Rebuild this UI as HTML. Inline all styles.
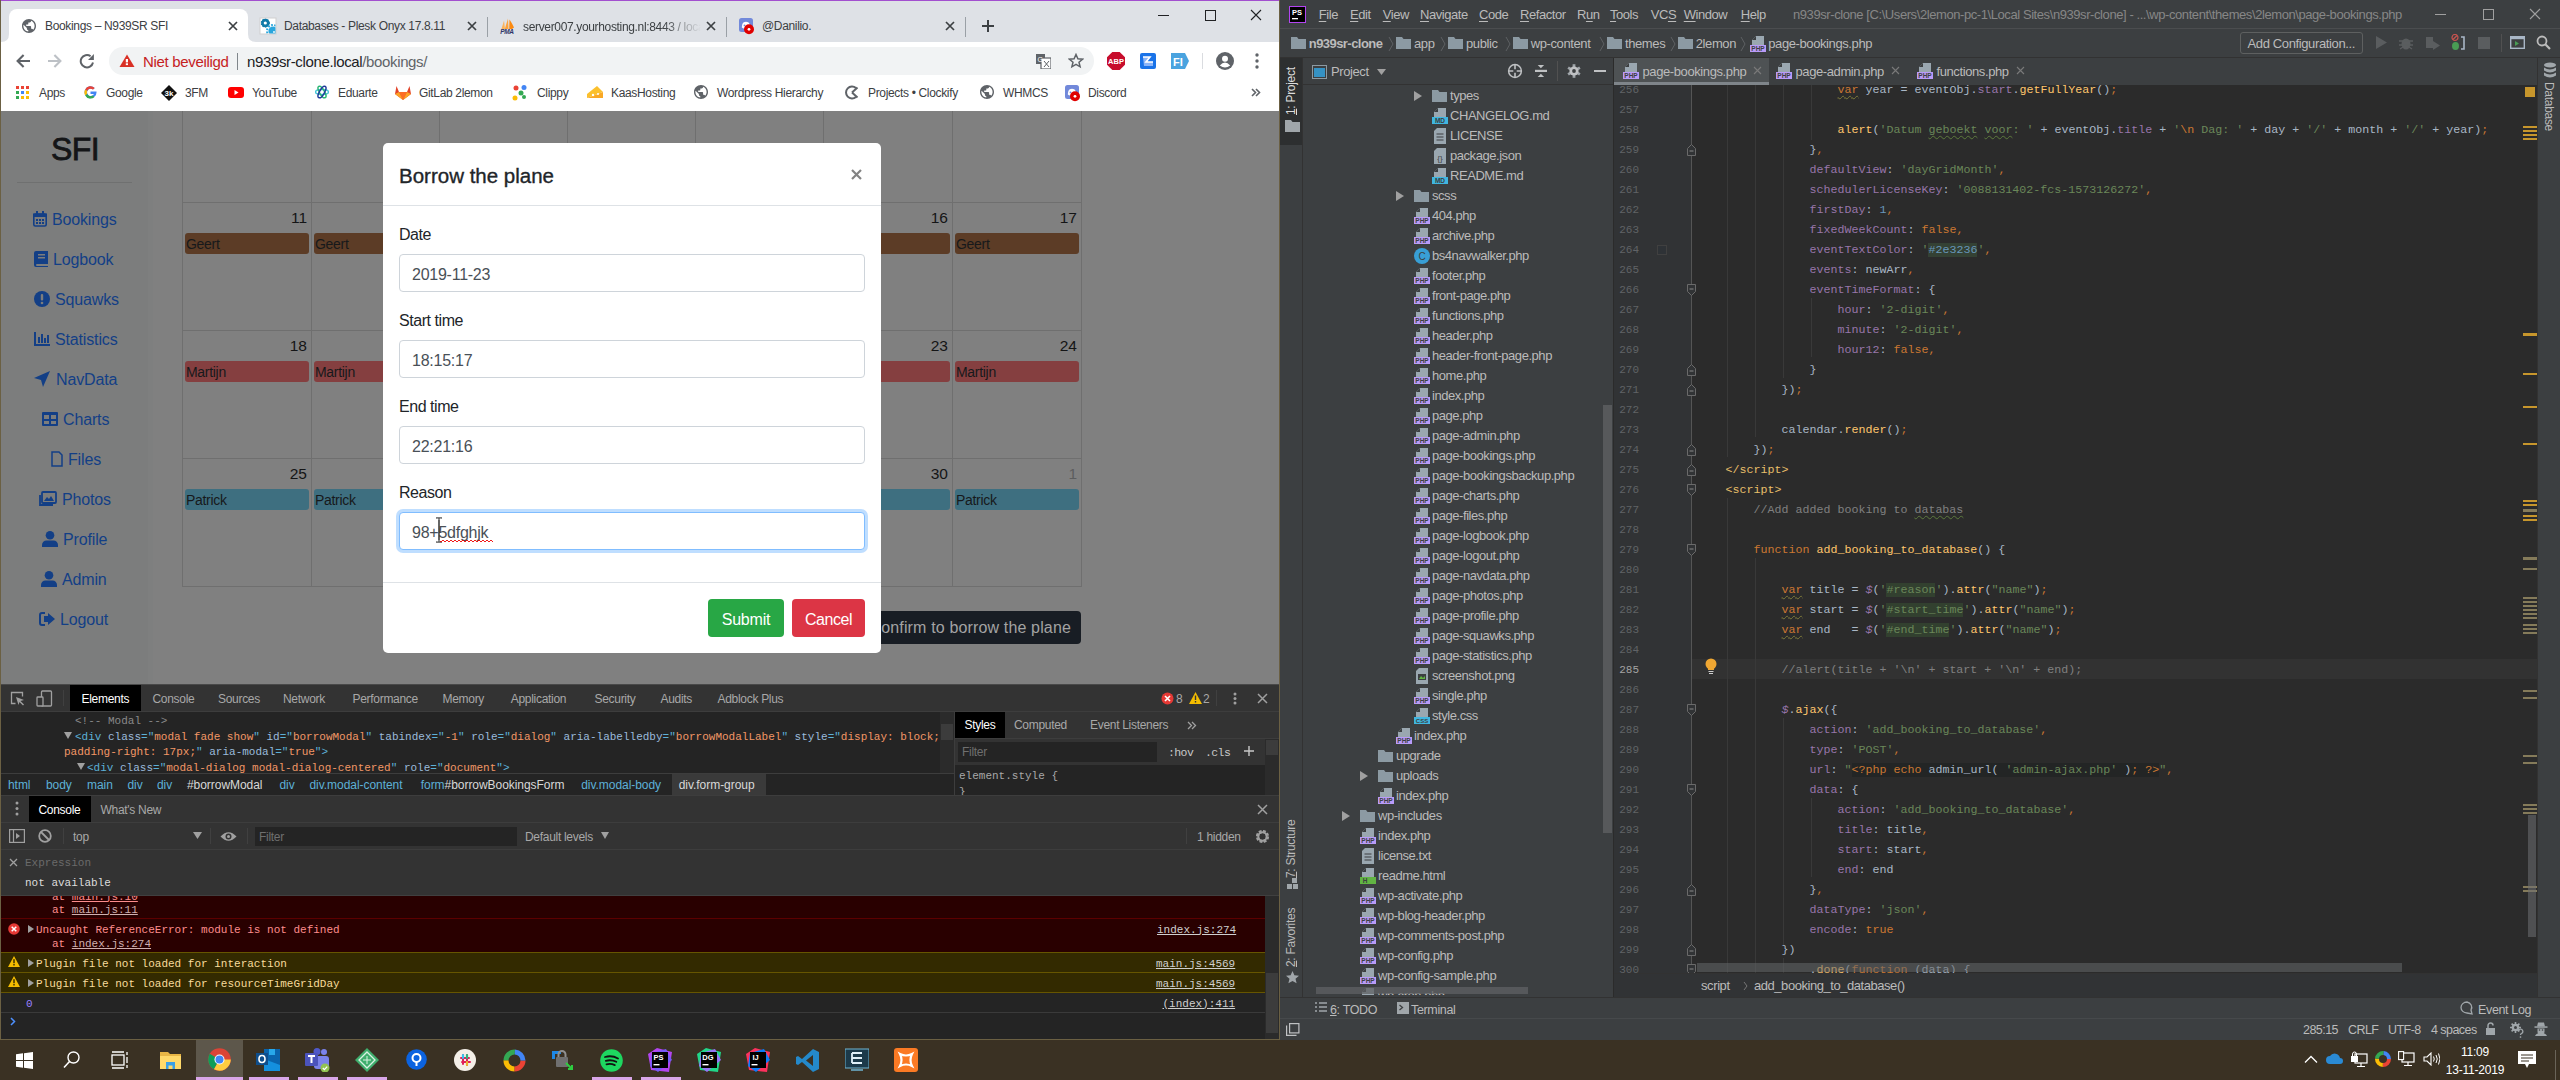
<!DOCTYPE html>
<html><head><meta charset="utf-8"><title>Screen</title>
<style>
html,body{margin:0;padding:0;width:2560px;height:1080px;overflow:hidden;background:#3c3f41;}
body{position:relative;font-family:"Liberation Sans",sans-serif;}
.a{position:absolute;}
.t{position:absolute;white-space:nowrap;}
u{text-decoration:underline;text-underline-offset:1px;}
</style></head><body>
<div class="a" style="left:0px;top:0px;width:1279px;height:42px;background:#dee1e6;"></div><div class="a" style="left:0px;top:0px;width:1279px;height:1px;background:#a24fcf;"></div><div class="a" style="left:0px;top:0px;width:1px;height:1040px;background:#6b6043;"></div><div class="a" style="left:1279px;top:0px;width:1px;height:1040px;background:#6b6043;"></div><div class="a" style="left:9px;top:9px;width:239px;height:34px;background:#fff;border-radius:8px 8px 0 0"></div><svg class="a" style="left:1px;top:34px;" width="8" height="8" viewBox="0 0 8 8"><path d="M0 8 Q8 8 8 0 L8 8Z" fill="#fff"/></svg><svg class="a" style="left:248px;top:34px;" width="8" height="8" viewBox="0 0 8 8"><path d="M8 8 Q0 8 0 0 L0 8Z" fill="#fff"/></svg><svg class="a" style="left:22px;top:19px;" width="14" height="14" viewBox="0 0 14 14"><svg viewBox="2 2 20 20" width="14" height="14"><path fill="#5f6368" d="M12 2C6.48 2 2 6.48 2 12s4.48 10 10 10 10-4.48 10-10S17.52 2 12 2zm-1 17.930c-3.95-.49-7-3.85-7-7.93 0-.62.08-1.21.21-1.79L9 15v1c0 1.1.9 2 2 2v1.93zm6.9-2.54c-.26-.81-1-1.39-1.9-1.39h-1v-3c0-.55-.45-1-1-1H8v-2h2c.55 0 1-.45 1-1V7h2c1.1 0 2-.9 2-2v-.41c2.930 1.19 5 4.06 5 7.41 0 2.08-.8 3.97-2.1 5.39z"/></svg></svg><div class="t" style="top:18.34px;font-size:12px;line-height:17px;color:#3c4043;font-family:'Liberation Sans', sans-serif;letter-spacing:-0.336px;left:45px;">Bookings – N939SR SFI</div><svg class="a" style="left:228.0px;top:21.0px;" width="10" height="10" viewBox="0 0 10 10"><path d="M1 1L9 9M9 1L1 9" stroke="#3c4043" stroke-width="1.7"/></svg><svg class="a" style="left:259px;top:17px;" width="18" height="18" viewBox="0 0 18 18"><defs><clipPath id="pc"><rect x="1.5" y="1.5" width="15" height="15"/></clipPath></defs><rect x="1" y="1" width="16" height="16" fill="#fff" stroke="#cfcfcf" stroke-width="1"/><g clip-path="url(#pc)"><circle cx="6.3" cy="6" r="2.9" fill="none" stroke="#0f7aa8" stroke-width="2.6"/><circle cx="6.3" cy="6" r="3.9" fill="none" stroke="#0f7aa8" stroke-width="1.4" stroke-dasharray="1.3 1.2"/><circle cx="14" cy="14" r="4.6" fill="#2aa6dd"/><circle cx="14" cy="14" r="6" fill="none" stroke="#2aa6dd" stroke-width="2" stroke-dasharray="1.8 1.4"/><circle cx="15" cy="15" r="0.9" fill="#fff"/></g></svg><div class="t" style="top:18.34px;font-size:12px;line-height:17px;color:#3c4043;font-family:'Liberation Sans', sans-serif;letter-spacing:-0.336px;left:284px;">Databases - Plesk Onyx 17.8.11</div><svg class="a" style="left:467.0px;top:21.0px;" width="10" height="10" viewBox="0 0 10 10"><path d="M1 1L9 9M9 1L1 9" stroke="#3c4043" stroke-width="1.7"/></svg><div class="a" style="left:487px;top:17px;width:1px;height:20px;background:#9aa0a6;"></div><svg class="a" style="left:498px;top:17px;" width="18" height="18" viewBox="0 0 18 18"><path d="M3.5 12 L6 3.5 L7 12Z" fill="#fbb35c"/><path d="M6.8 12 L10 1.5 L10.5 12Z" fill="#fca23c"/><path d="M11.2 12 L11.5 2.5 Q14 6 16 10.5 L14 12Z" fill="#fb8a10"/><text x="9" y="17" font-size="6.5" font-weight="700" font-style="italic" text-anchor="middle" fill="#2e3466" font-family="Liberation Sans" letter-spacing="-0.3">PMA</text></svg><div class="t" style="left:523px;top:18px;width:185px;height:18px;overflow:hidden;font:12px/18px 'Liberation Sans', sans-serif;letter-spacing:-0.34px;color:#3c4043;white-space:nowrap;-webkit-mask-image:linear-gradient(90deg,#000 140px,transparent 178px)">server007.yourhosting.nl:8443 / localhost</div><svg class="a" style="left:706.0px;top:21.0px;" width="10" height="10" viewBox="0 0 10 10"><path d="M1 1L9 9M9 1L1 9" stroke="#3c4043" stroke-width="1.7"/></svg><div class="a" style="left:726px;top:17px;width:1px;height:20px;background:#9aa0a6;"></div><svg class="a" style="left:739px;top:18px;" width="17" height="17" viewBox="0 0 17 17"><rect x="0" y="0" width="14" height="14" rx="2.5" fill="#7289da"/><path d="M2.8 9.5 Q3 5.3 4.8 4.2 Q7 3.5 9.2 4.2 Q11 5.3 11.2 9.5 Q9.5 10.8 8.3 10.3 L7.8 9.6 Q7 9.9 6.2 9.6 L5.7 10.3 Q4.5 10.8 2.8 9.5Z" fill="#fff"/><circle cx="5.5" cy="7.4" r="0.9" fill="#7289da"/><circle cx="10" cy="11.3" r="5" fill="#e00000"/><circle cx="10" cy="11.3" r="1.4" fill="#fff"/></svg><div class="t" style="top:18.34px;font-size:12px;line-height:17px;color:#3c4043;font-family:'Liberation Sans', sans-serif;letter-spacing:-0.336px;left:762px;">@Danilio.</div><svg class="a" style="left:945.0px;top:21.0px;" width="10" height="10" viewBox="0 0 10 10"><path d="M1 1L9 9M9 1L1 9" stroke="#3c4043" stroke-width="1.7"/></svg><div class="a" style="left:965px;top:17px;width:1px;height:20px;background:#9aa0a6;"></div><svg class="a" style="left:982px;top:20px;" width="12" height="12" viewBox="0 0 12 12"><path d="M6 0V12M0 6H12" stroke="#3c4043" stroke-width="2"/></svg><div class="a" style="left:1158px;top:15px;width:11px;height:1px;background:#202124;"></div><div class="a" style="left:1205px;top:10px;width:9px;height:9px;border:1px solid #202124"></div><svg class="a" style="left:1250px;top:9px;" width="12" height="12" viewBox="0 0 12 12"><path d="M1 1L11 11M11 1L1 11" stroke="#202124" stroke-width="1.1"/></svg><div class="a" style="left:1px;top:42px;width:1278px;height:36px;background:#fff;"></div><svg class="a" style="left:15px;top:53px;" width="16" height="16" viewBox="0 0 16 16"><path d="M15 8H2.8M8.6 2L2.6 8l6 6" stroke="#5f6368" stroke-width="2.1" fill="none"/></svg><svg class="a" style="left:47px;top:53px;" width="16" height="16" viewBox="0 0 16 16"><path d="M1 8H13.2M7.4 2l6 6-6 6" stroke="#bdc1c6" stroke-width="2.1" fill="none"/></svg><svg class="a" style="left:79px;top:53px;" width="16" height="16" viewBox="0 0 16 16"><path d="M14 9.5A6.2 6.2 0 1 1 11.6 3.2" stroke="#5f6368" stroke-width="2" fill="none"/><path d="M9 6.9L14.9 1V6.9z" fill="#5f6368"/></svg><div class="a" style="left:109px;top:47px;width:985px;height:28px;border-radius:14px;background:#f1f3f4"></div><svg class="a" style="left:119px;top:54px;" width="16" height="13" viewBox="0 0 16 13"><path d="M8 0.5L15.5 13H0.5Z" fill="#d93025"/><rect x="6.8" y="5" width="2.2" height="3.4" fill="#fff"/><rect x="6.8" y="9.3" width="2.2" height="1.8" fill="#fff"/></svg><div class="t" style="top:51.30px;font-size:15px;line-height:21px;color:#c5221f;font-family:'Liberation Sans', sans-serif;letter-spacing:-0.330px;left:143px;">Niet beveiligd</div><div class="a" style="left:237px;top:53px;width:1px;height:17px;background:#80868b;"></div><div class="t" style="top:51.30px;font-size:15px;line-height:21px;color:#202124;font-family:'Liberation Sans', sans-serif;letter-spacing:-0.360px;left:247px;">n939sr-clone.local<span style="color:#5f6368">/bookings/</span></div><svg class="a" style="left:1036px;top:54px;" width="15" height="15" viewBox="0 0 15 15"><rect x="0" y="0" width="9" height="10" fill="#5f6368"/><rect x="5" y="4" width="10" height="11" fill="#fff" stroke="#5f6368" stroke-width="1.2"/><text x="1.5" y="8" font-size="7" fill="#fff" font-family="Liberation Sans">G</text><path d="M8 7l5 6M13 7l-5 6" stroke="#5f6368" stroke-width="1"/></svg><svg class="a" style="left:1068px;top:53px;" width="16" height="16" viewBox="0 0 16 16"><path d="M8 1.5l1.9 4.3 4.6.4-3.5 3 1.1 4.6L8 11.4 3.9 13.8 5 9.2 1.5 6.2l4.6-.4z" fill="none" stroke="#5f6368" stroke-width="1.5"/></svg><svg class="a" style="left:1107px;top:52px;" width="18" height="18" viewBox="0 0 18 18"><path d="M5.3 0h7.4L18 5.3v7.4L12.7 18H5.3L0 12.7V5.3z" fill="#c70d2c"/><text x="9" y="12" font-size="7.5" font-weight="700" text-anchor="middle" fill="#fff" font-family="Liberation Sans">ABP</text></svg><svg class="a" style="left:1140px;top:53px;" width="16" height="16" viewBox="0 0 16 16"><rect x="0" y="0" width="16" height="16" rx="2" fill="#1a73e8"/><path d="M3 4 L10 4 L6 9 L13 9 L13 13 L4 13 Z" fill="#8ab4f8"/><path d="M3 4h7l-4 5h7" stroke="#fff" stroke-width="1.6" fill="none"/></svg><svg class="a" style="left:1171px;top:53px;" width="18" height="16" viewBox="0 0 18 16"><path d="M0 0H14L18 8 14 16H0Z" fill="#4aa3df"/><text x="2" y="12.5" font-size="11" font-weight="700" fill="#fff" font-family="Liberation Sans">FI</text></svg><div class="a" style="left:1202px;top:53px;width:1px;height:16px;background:#dadce0;"></div><svg class="a" style="left:1216px;top:52px;" width="18" height="18" viewBox="0 0 18 18"><circle cx="9" cy="9" r="9" fill="#5f6368"/><circle cx="9" cy="6.8" r="3" fill="#fff"/><path d="M3.8 13.5q5.2 -6 10.4 0q-5.2 4 -10.4 0z" fill="#fff"/></svg><svg class="a" style="left:1255px;top:53px;" width="4" height="16" viewBox="0 0 4 16"><circle cx="2" cy="2" r="1.7" fill="#5f6368"/><circle cx="2" cy="8" r="1.7" fill="#5f6368"/><circle cx="2" cy="14" r="1.7" fill="#5f6368"/></svg><div class="a" style="left:1px;top:78px;width:1278px;height:33px;background:#fff;"></div><svg class="a" style="left:16px;top:86px;" width="13" height="13" viewBox="0 0 13 13"><rect x="0" y="0" width="3" height="3" fill="#ea4335"/><rect x="5" y="0" width="3" height="3" fill="#ea4335"/><rect x="10" y="0" width="3" height="3" fill="#ea4335"/><rect x="0" y="5" width="3" height="3" fill="#34a853"/><rect x="5" y="5" width="3" height="3" fill="#4285f4"/><rect x="10" y="5" width="3" height="3" fill="#fbbc05"/><rect x="0" y="10" width="3" height="3" fill="#34a853"/><rect x="5" y="10" width="3" height="3" fill="#fbbc05"/><rect x="10" y="10" width="3" height="3" fill="#fbbc05"/></svg><div class="t" style="top:85.34px;font-size:12px;line-height:17px;color:#3c4043;font-family:'Liberation Sans', sans-serif;letter-spacing:-0.336px;left:39px;">Apps</div><svg class="a" style="left:84px;top:86px;" width="13" height="13" viewBox="0 0 13 13"><path d="M12.5 5.5H6.5v2.5h3.4A3.6 3.6 0 1 1 9 3.6l1.7-1.7A6 6 0 1 0 12.5 5.5z" fill="#4285f4"/><path d="M1.2 3.6l2 1.5A3.6 3.6 0 0 1 9 3.6l1.7-1.7A6 6 0 0 0 1.2 3.6z" fill="#ea4335"/><path d="M1.2 3.6a6 6 0 0 0 0 5.8l2-1.5a3.6 3.6 0 0 1 0-2.8z" fill="#fbbc05"/><path d="M1.2 9.4A6 6 0 0 0 10.5 11l-1.9-1.5A3.6 3.6 0 0 1 3.2 7.9z" fill="#34a853"/></svg><div class="t" style="top:85.34px;font-size:12px;line-height:17px;color:#3c4043;font-family:'Liberation Sans', sans-serif;letter-spacing:-0.336px;left:106px;">Google</div><svg class="a" style="left:161px;top:85px;" width="16" height="16" viewBox="0 0 16 16"><path d="M8 0L16 8 8 16 0 8z" fill="#111"/><text x="8" y="11" font-size="8" font-weight="700" text-anchor="middle" fill="#fff" font-family="Liberation Sans">3k</text></svg><div class="t" style="top:85.34px;font-size:12px;line-height:17px;color:#3c4043;font-family:'Liberation Sans', sans-serif;letter-spacing:-0.336px;left:185px;">3FM</div><svg class="a" style="left:228px;top:87px;" width="16" height="11" viewBox="0 0 16 11"><rect x="0" y="0" width="16" height="11" rx="3" fill="#f00"/><path d="M6.5 3v5l4-2.5z" fill="#fff"/></svg><div class="t" style="top:85.34px;font-size:12px;line-height:17px;color:#3c4043;font-family:'Liberation Sans', sans-serif;letter-spacing:-0.336px;left:252px;">YouTube</div><svg class="a" style="left:315px;top:85px;" width="14" height="14" viewBox="0 0 14 14"><ellipse cx="7" cy="7" rx="6.5" ry="2.5" fill="none" stroke="#4ac6d8" stroke-width="1.5"/><ellipse cx="7" cy="7" rx="6.5" ry="2.5" transform="rotate(60 7 7)" fill="none" stroke="#2bb673" stroke-width="1.5"/><ellipse cx="7" cy="7" rx="6.5" ry="2.5" transform="rotate(120 7 7)" fill="none" stroke="#1f3b9a" stroke-width="1.5"/></svg><div class="t" style="top:85.34px;font-size:12px;line-height:17px;color:#3c4043;font-family:'Liberation Sans', sans-serif;letter-spacing:-0.336px;left:338px;">Eduarte</div><svg class="a" style="left:395px;top:85px;" width="16" height="15" viewBox="0 0 16 15"><path d="M8 15L0 9 1.5 1 4 7h8l2.5-6L16 9z" fill="#e24329"/><path d="M8 15L4 7h8z" fill="#fc6d26"/><path d="M0 9l4-2 4 8z M16 9l-4-2-4 8z" fill="#fca326"/></svg><div class="t" style="top:85.34px;font-size:12px;line-height:17px;color:#3c4043;font-family:'Liberation Sans', sans-serif;letter-spacing:-0.336px;left:419px;">GitLab 2lemon</div><svg class="a" style="left:512px;top:85px;" width="16" height="16" viewBox="0 0 16 16"><circle cx="4" cy="3" r="2.5" fill="#ea4335"/><circle cx="12" cy="2.5" r="2.5" fill="#4285f4"/><circle cx="9" cy="8" r="2.5" fill="#34a853"/><circle cx="3" cy="13" r="2.5" fill="#fbbc05"/><circle cx="12" cy="12" r="2" fill="#34a853"/></svg><div class="t" style="top:85.34px;font-size:12px;line-height:17px;color:#3c4043;font-family:'Liberation Sans', sans-serif;letter-spacing:-0.336px;left:537px;">Clippy</div><svg class="a" style="left:587px;top:86px;" width="16" height="13" viewBox="0 0 16 13"><path d="M0 12L16 6 10 0 0 8z" fill="#fbc02d"/><path d="M0 12L16 6v6z" fill="#f9a825"/><circle cx="6" cy="9" r="1.2" fill="#fff"/><circle cx="11" cy="8" r="1" fill="#fff"/></svg><div class="t" style="top:85.34px;font-size:12px;line-height:17px;color:#3c4043;font-family:'Liberation Sans', sans-serif;letter-spacing:-0.336px;left:611px;">KaasHosting</div><svg class="a" style="left:694px;top:85px;" width="14" height="14" viewBox="0 0 14 14"><svg viewBox="2 2 20 20" width="14" height="14"><path fill="#5f6368" d="M12 2C6.48 2 2 6.48 2 12s4.48 10 10 10 10-4.48 10-10S17.52 2 12 2zm-1 17.930c-3.95-.49-7-3.85-7-7.93 0-.62.08-1.21.21-1.79L9 15v1c0 1.1.9 2 2 2v1.93zm6.9-2.54c-.26-.81-1-1.39-1.9-1.39h-1v-3c0-.55-.45-1-1-1H8v-2h2c.55 0 1-.45 1-1V7h2c1.1 0 2-.9 2-2v-.41c2.930 1.19 5 4.06 5 7.41 0 2.08-.8 3.97-2.1 5.39z"/></svg></svg><div class="t" style="top:85.34px;font-size:12px;line-height:17px;color:#3c4043;font-family:'Liberation Sans', sans-serif;letter-spacing:-0.336px;left:717px;">Wordpress Hierarchy</div><svg class="a" style="left:845px;top:85px;" width="14" height="15" viewBox="0 0 14 15"><path d="M11 3A6 6 0 1 0 11 12" stroke="#5f6368" stroke-width="2" fill="none"/><path d="M7 7.5L12.5 2.5M7 7.5l5.5 5" stroke="#5f6368" stroke-width="2"/></svg><div class="t" style="top:85.34px;font-size:12px;line-height:17px;color:#3c4043;font-family:'Liberation Sans', sans-serif;letter-spacing:-0.336px;left:868px;">Projects • Clockify</div><svg class="a" style="left:980px;top:85px;" width="14" height="14" viewBox="0 0 14 14"><svg viewBox="2 2 20 20" width="14" height="14"><path fill="#5f6368" d="M12 2C6.48 2 2 6.48 2 12s4.48 10 10 10 10-4.48 10-10S17.52 2 12 2zm-1 17.930c-3.95-.49-7-3.85-7-7.93 0-.62.08-1.21.21-1.79L9 15v1c0 1.1.9 2 2 2v1.93zm6.9-2.54c-.26-.81-1-1.39-1.9-1.39h-1v-3c0-.55-.45-1-1-1H8v-2h2c.55 0 1-.45 1-1V7h2c1.1 0 2-.9 2-2v-.41c2.930 1.19 5 4.06 5 7.41 0 2.08-.8 3.97-2.1 5.39z"/></svg></svg><div class="t" style="top:85.34px;font-size:12px;line-height:17px;color:#3c4043;font-family:'Liberation Sans', sans-serif;letter-spacing:-0.336px;left:1003px;">WHMCS</div><svg class="a" style="left:1065px;top:85px;" width="17" height="17" viewBox="0 0 17 17"><rect x="0" y="0" width="14" height="14" rx="2.5" fill="#7289da"/><path d="M2.8 9.5 Q3 5.3 4.8 4.2 Q7 3.5 9.2 4.2 Q11 5.3 11.2 9.5 Q9.5 10.8 8.3 10.3 L7.8 9.6 Q7 9.9 6.2 9.6 L5.7 10.3 Q4.5 10.8 2.8 9.5Z" fill="#fff"/><circle cx="5.5" cy="7.4" r="0.9" fill="#7289da"/><circle cx="10" cy="11.3" r="5" fill="#e00000"/><circle cx="10" cy="11.3" r="1.4" fill="#fff"/></svg><div class="t" style="top:85.34px;font-size:12px;line-height:17px;color:#3c4043;font-family:'Liberation Sans', sans-serif;letter-spacing:-0.336px;left:1088px;">Discord</div><svg class="a" style="left:1251px;top:88px;" width="10" height="9" viewBox="0 0 10 9"><path d="M1 1l3.5 3.5L1 8M5 1l3.5 3.5L5 8" stroke="#5f6368" stroke-width="1.6" fill="none"/></svg><div class="a" style="left:1px;top:111px;width:1278px;height:573px;background:#808080;"></div><div class="a" style="left:1px;top:111px;width:147px;height:573px;background:#7c7d7d;"></div><div class="a" style="left:148px;top:111px;width:5px;height:573px;background:#7e7f7f;"></div><div class="t" style="top:127.41px;font-size:32px;line-height:45px;color:#141517;font-family:'Liberation Sans', sans-serif;letter-spacing:-0.600px;left:5.0px;width:140px;text-align:center;-webkit-text-stroke:0.8px #141517;">SFI</div><div class="a" style="left:17px;top:182px;width:115px;height:1px;background:#6f7070;"></div><div class="t" style="top:209.45px;font-size:16px;line-height:22px;color:#133f86;font-family:'Liberation Sans', sans-serif;letter-spacing:-0.150px;left:52px;">Bookings</div><svg class="a" style="left:33px;top:211px;" width="14" height="16" viewBox="0 0 14 16"><rect x="0.8" y="3" width="12.4" height="12" rx="1.5" fill="none" stroke="#133f86" stroke-width="1.6"/><rect x="0" y="2.5" width="14" height="3.5" fill="#133f86"/><rect x="3" y="0" width="2" height="4" fill="#133f86"/><rect x="9" y="0" width="2" height="4" fill="#133f86"/><rect x="3" y="8" width="2" height="2" fill="#133f86"/><rect x="3" y="11" width="2" height="2" fill="#133f86"/><rect x="6" y="8" width="2" height="2" fill="#133f86"/><rect x="6" y="11" width="2" height="2" fill="#133f86"/><rect x="9" y="8" width="2" height="2" fill="#133f86"/><rect x="9" y="11" width="2" height="2" fill="#133f86"/></svg><div class="t" style="top:249.45px;font-size:16px;line-height:22px;color:#133f86;font-family:'Liberation Sans', sans-serif;letter-spacing:-0.150px;left:53px;">Logbook</div><svg class="a" style="left:34px;top:251px;" width="14" height="16" viewBox="0 0 14 16"><path d="M2 0H14V13H3A1 1 0 0 0 3 15H14V16H2A2 2 0 0 1 0 14V2A2 2 0 0 1 2 0z" fill="#133f86"/><rect x="4" y="3" width="7" height="1.5" fill="#7c7d7d"/><rect x="4" y="6" width="7" height="1.5" fill="#7c7d7d"/></svg><div class="t" style="top:289.45px;font-size:16px;line-height:22px;color:#133f86;font-family:'Liberation Sans', sans-serif;letter-spacing:-0.150px;left:55px;">Squawks</div><svg class="a" style="left:34px;top:291px;" width="16" height="16" viewBox="0 0 16 16"><circle cx="8" cy="8" r="8" fill="#133f86"/><rect x="6.8" y="3" width="2.4" height="6.5" rx="1" fill="#7c7d7d"/><circle cx="8" cy="12" r="1.3" fill="#7c7d7d"/></svg><div class="t" style="top:329.45px;font-size:16px;line-height:22px;color:#133f86;font-family:'Liberation Sans', sans-serif;letter-spacing:-0.150px;left:55px;">Statistics</div><svg class="a" style="left:34px;top:332px;" width="16" height="14" viewBox="0 0 16 14"><path d="M0 0h2v12h14v2H0z" fill="#133f86"/><rect x="4" y="5" width="2" height="6" fill="#133f86"/><rect x="7" y="2" width="2" height="9" fill="#133f86"/><rect x="10" y="6" width="2" height="5" fill="#133f86"/><rect x="13" y="3" width="2" height="8" fill="#133f86"/></svg><div class="t" style="top:369.45px;font-size:16px;line-height:22px;color:#133f86;font-family:'Liberation Sans', sans-serif;letter-spacing:-0.150px;left:56px;">NavData</div><svg class="a" style="left:34px;top:371px;" width="16" height="16" viewBox="0 0 16 16"><path d="M16 0L0 7l7 2 2 7z" fill="#133f86"/></svg><div class="t" style="top:409.45px;font-size:16px;line-height:22px;color:#133f86;font-family:'Liberation Sans', sans-serif;letter-spacing:-0.150px;left:63px;">Charts</div><svg class="a" style="left:42px;top:412px;" width="16" height="14" viewBox="0 0 16 14"><rect x="0" y="0" width="16" height="14" rx="1" fill="#133f86"/><rect x="2" y="3" width="5" height="4" fill="#7c7d7d"/><rect x="9" y="3" width="5" height="4" fill="#7c7d7d"/><rect x="2" y="9" width="5" height="3" fill="#7c7d7d"/><rect x="9" y="9" width="5" height="3" fill="#7c7d7d"/></svg><div class="t" style="top:449.45px;font-size:16px;line-height:22px;color:#133f86;font-family:'Liberation Sans', sans-serif;letter-spacing:-0.150px;left:68px;">Files</div><svg class="a" style="left:51px;top:451px;" width="12" height="16" viewBox="0 0 12 16"><path d="M1 1H8L11 4V15H1Z" fill="none" stroke="#133f86" stroke-width="1.5"/></svg><div class="t" style="top:489.45px;font-size:16px;line-height:22px;color:#133f86;font-family:'Liberation Sans', sans-serif;letter-spacing:-0.150px;left:62px;">Photos</div><svg class="a" style="left:39px;top:491px;" width="18" height="16" viewBox="0 0 18 16"><rect x="3" y="1" width="14" height="11" rx="1" fill="none" stroke="#133f86" stroke-width="1.8"/><path d="M1 4V14H14" stroke="#133f86" stroke-width="1.8" fill="none"/><path d="M5 10l3-4 2 2 2-3 3 5z" fill="#133f86"/></svg><div class="t" style="top:529.45px;font-size:16px;line-height:22px;color:#133f86;font-family:'Liberation Sans', sans-serif;letter-spacing:-0.150px;left:63px;">Profile</div><svg class="a" style="left:42px;top:531px;" width="16" height="16" viewBox="0 0 16 16"><circle cx="8" cy="4.3" r="4.3" fill="#133f86"/><path d="M0 16v-2a4.5 4.5 0 0 1 4.5-4.5h7A4.5 4.5 0 0 1 16 14v2z" fill="#133f86"/></svg><div class="t" style="top:569.45px;font-size:16px;line-height:22px;color:#133f86;font-family:'Liberation Sans', sans-serif;letter-spacing:-0.150px;left:62px;">Admin</div><svg class="a" style="left:41px;top:571px;" width="16" height="16" viewBox="0 0 16 16"><circle cx="8" cy="4.3" r="4.3" fill="#133f86"/><path d="M0 16v-2a4.5 4.5 0 0 1 4.5-4.5h7A4.5 4.5 0 0 1 16 14v2z" fill="#133f86"/></svg><div class="t" style="top:609.45px;font-size:16px;line-height:22px;color:#133f86;font-family:'Liberation Sans', sans-serif;letter-spacing:-0.150px;left:60px;">Logout</div><svg class="a" style="left:39px;top:611px;" width="16" height="16" viewBox="0 0 16 16"><path d="M6 2H3A2 2 0 0 0 1 4v8a2 2 0 0 0 2 2h3" stroke="#133f86" stroke-width="2" fill="none"/><path d="M9 2v3H5v6h4v3l7-6z" fill="#133f86"/></svg><div class="a" style="left:182px;top:111px;width:1px;height:476px;background:#6f6f6f;"></div><div class="a" style="left:311px;top:111px;width:1px;height:476px;background:#6f6f6f;"></div><div class="a" style="left:439px;top:111px;width:1px;height:476px;background:#6f6f6f;"></div><div class="a" style="left:567px;top:111px;width:1px;height:476px;background:#6f6f6f;"></div><div class="a" style="left:695px;top:111px;width:1px;height:476px;background:#6f6f6f;"></div><div class="a" style="left:823px;top:111px;width:1px;height:476px;background:#6f6f6f;"></div><div class="a" style="left:952px;top:111px;width:1px;height:476px;background:#6f6f6f;"></div><div class="a" style="left:1081px;top:111px;width:1px;height:476px;background:#6f6f6f;"></div><div class="a" style="left:182px;top:202px;width:900px;height:1px;background:#6f6f6f;"></div><div class="a" style="left:182px;top:330px;width:900px;height:1px;background:#6f6f6f;"></div><div class="a" style="left:182px;top:458px;width:900px;height:1px;background:#6f6f6f;"></div><div class="a" style="left:182px;top:586px;width:900px;height:1px;background:#6f6f6f;"></div><div class="t" style="top:206.63px;font-size:15.5px;line-height:22px;color:#141516;font-family:'Liberation Sans', sans-serif;right:2253px;text-align:right;">11</div><div class="a" style="left:185px;top:233px;width:124px;height:21px;background:#5c3c26;border-radius:3px"></div><div class="t" style="top:234.15px;font-size:14px;line-height:20px;color:#17191b;font-family:'Liberation Sans', sans-serif;letter-spacing:-0.300px;left:186px;">Geert</div><div class="t" style="top:206.63px;font-size:15.5px;line-height:22px;color:#141516;font-family:'Liberation Sans', sans-serif;right:2125px;text-align:right;">12</div><div class="a" style="left:314px;top:233px;width:123px;height:21px;background:#5c3c26;border-radius:3px"></div><div class="t" style="top:234.15px;font-size:14px;line-height:20px;color:#17191b;font-family:'Liberation Sans', sans-serif;letter-spacing:-0.300px;left:315px;">Geert</div><div class="t" style="top:206.63px;font-size:15.5px;line-height:22px;color:#141516;font-family:'Liberation Sans', sans-serif;right:1997px;text-align:right;">13</div><div class="a" style="left:442px;top:233px;width:123px;height:21px;background:#5c3c26;border-radius:3px"></div><div class="t" style="top:234.15px;font-size:14px;line-height:20px;color:#17191b;font-family:'Liberation Sans', sans-serif;letter-spacing:-0.300px;left:443px;">Geert</div><div class="t" style="top:206.63px;font-size:15.5px;line-height:22px;color:#141516;font-family:'Liberation Sans', sans-serif;right:1869px;text-align:right;">14</div><div class="a" style="left:570px;top:233px;width:123px;height:21px;background:#5c3c26;border-radius:3px"></div><div class="t" style="top:234.15px;font-size:14px;line-height:20px;color:#17191b;font-family:'Liberation Sans', sans-serif;letter-spacing:-0.300px;left:571px;">Geert</div><div class="t" style="top:206.63px;font-size:15.5px;line-height:22px;color:#141516;font-family:'Liberation Sans', sans-serif;right:1741px;text-align:right;">15</div><div class="a" style="left:698px;top:233px;width:123px;height:21px;background:#5c3c26;border-radius:3px"></div><div class="t" style="top:234.15px;font-size:14px;line-height:20px;color:#17191b;font-family:'Liberation Sans', sans-serif;letter-spacing:-0.300px;left:699px;">Geert</div><div class="t" style="top:206.63px;font-size:15.5px;line-height:22px;color:#141516;font-family:'Liberation Sans', sans-serif;right:1612px;text-align:right;">16</div><div class="a" style="left:826px;top:233px;width:124px;height:21px;background:#5c3c26;border-radius:3px"></div><div class="t" style="top:234.15px;font-size:14px;line-height:20px;color:#17191b;font-family:'Liberation Sans', sans-serif;letter-spacing:-0.300px;left:827px;">Geert</div><div class="t" style="top:206.63px;font-size:15.5px;line-height:22px;color:#141516;font-family:'Liberation Sans', sans-serif;right:1483px;text-align:right;">17</div><div class="a" style="left:955px;top:233px;width:124px;height:21px;background:#5c3c26;border-radius:3px"></div><div class="t" style="top:234.15px;font-size:14px;line-height:20px;color:#17191b;font-family:'Liberation Sans', sans-serif;letter-spacing:-0.300px;left:956px;">Geert</div><div class="t" style="top:334.63px;font-size:15.5px;line-height:22px;color:#141516;font-family:'Liberation Sans', sans-serif;right:2253px;text-align:right;">18</div><div class="a" style="left:185px;top:361px;width:124px;height:21px;background:#853f40;border-radius:3px"></div><div class="t" style="top:362.15px;font-size:14px;line-height:20px;color:#17191b;font-family:'Liberation Sans', sans-serif;letter-spacing:-0.300px;left:186px;">Martijn</div><div class="t" style="top:334.63px;font-size:15.5px;line-height:22px;color:#141516;font-family:'Liberation Sans', sans-serif;right:2125px;text-align:right;">19</div><div class="a" style="left:314px;top:361px;width:123px;height:21px;background:#853f40;border-radius:3px"></div><div class="t" style="top:362.15px;font-size:14px;line-height:20px;color:#17191b;font-family:'Liberation Sans', sans-serif;letter-spacing:-0.300px;left:315px;">Martijn</div><div class="t" style="top:334.63px;font-size:15.5px;line-height:22px;color:#141516;font-family:'Liberation Sans', sans-serif;right:1997px;text-align:right;">20</div><div class="a" style="left:442px;top:361px;width:123px;height:21px;background:#853f40;border-radius:3px"></div><div class="t" style="top:362.15px;font-size:14px;line-height:20px;color:#17191b;font-family:'Liberation Sans', sans-serif;letter-spacing:-0.300px;left:443px;">Martijn</div><div class="t" style="top:334.63px;font-size:15.5px;line-height:22px;color:#141516;font-family:'Liberation Sans', sans-serif;right:1869px;text-align:right;">21</div><div class="a" style="left:570px;top:361px;width:123px;height:21px;background:#853f40;border-radius:3px"></div><div class="t" style="top:362.15px;font-size:14px;line-height:20px;color:#17191b;font-family:'Liberation Sans', sans-serif;letter-spacing:-0.300px;left:571px;">Martijn</div><div class="t" style="top:334.63px;font-size:15.5px;line-height:22px;color:#141516;font-family:'Liberation Sans', sans-serif;right:1741px;text-align:right;">22</div><div class="a" style="left:698px;top:361px;width:123px;height:21px;background:#853f40;border-radius:3px"></div><div class="t" style="top:362.15px;font-size:14px;line-height:20px;color:#17191b;font-family:'Liberation Sans', sans-serif;letter-spacing:-0.300px;left:699px;">Martijn</div><div class="t" style="top:334.63px;font-size:15.5px;line-height:22px;color:#141516;font-family:'Liberation Sans', sans-serif;right:1612px;text-align:right;">23</div><div class="a" style="left:826px;top:361px;width:124px;height:21px;background:#853f40;border-radius:3px"></div><div class="t" style="top:362.15px;font-size:14px;line-height:20px;color:#17191b;font-family:'Liberation Sans', sans-serif;letter-spacing:-0.300px;left:827px;">Martijn</div><div class="t" style="top:334.63px;font-size:15.5px;line-height:22px;color:#141516;font-family:'Liberation Sans', sans-serif;right:1483px;text-align:right;">24</div><div class="a" style="left:955px;top:361px;width:124px;height:21px;background:#853f40;border-radius:3px"></div><div class="t" style="top:362.15px;font-size:14px;line-height:20px;color:#17191b;font-family:'Liberation Sans', sans-serif;letter-spacing:-0.300px;left:956px;">Martijn</div><div class="t" style="top:462.63px;font-size:15.5px;line-height:22px;color:#141516;font-family:'Liberation Sans', sans-serif;right:2253px;text-align:right;">25</div><div class="a" style="left:185px;top:489px;width:124px;height:21px;background:#3e6f80;border-radius:3px"></div><div class="t" style="top:490.15px;font-size:14px;line-height:20px;color:#17191b;font-family:'Liberation Sans', sans-serif;letter-spacing:-0.300px;left:186px;">Patrick</div><div class="t" style="top:462.63px;font-size:15.5px;line-height:22px;color:#141516;font-family:'Liberation Sans', sans-serif;right:2125px;text-align:right;">26</div><div class="a" style="left:314px;top:489px;width:123px;height:21px;background:#3e6f80;border-radius:3px"></div><div class="t" style="top:490.15px;font-size:14px;line-height:20px;color:#17191b;font-family:'Liberation Sans', sans-serif;letter-spacing:-0.300px;left:315px;">Patrick</div><div class="t" style="top:462.63px;font-size:15.5px;line-height:22px;color:#141516;font-family:'Liberation Sans', sans-serif;right:1997px;text-align:right;">27</div><div class="a" style="left:442px;top:489px;width:123px;height:21px;background:#3e6f80;border-radius:3px"></div><div class="t" style="top:490.15px;font-size:14px;line-height:20px;color:#17191b;font-family:'Liberation Sans', sans-serif;letter-spacing:-0.300px;left:443px;">Patrick</div><div class="t" style="top:462.63px;font-size:15.5px;line-height:22px;color:#141516;font-family:'Liberation Sans', sans-serif;right:1869px;text-align:right;">28</div><div class="a" style="left:570px;top:489px;width:123px;height:21px;background:#3e6f80;border-radius:3px"></div><div class="t" style="top:490.15px;font-size:14px;line-height:20px;color:#17191b;font-family:'Liberation Sans', sans-serif;letter-spacing:-0.300px;left:571px;">Patrick</div><div class="t" style="top:462.63px;font-size:15.5px;line-height:22px;color:#141516;font-family:'Liberation Sans', sans-serif;right:1741px;text-align:right;">29</div><div class="a" style="left:698px;top:489px;width:123px;height:21px;background:#3e6f80;border-radius:3px"></div><div class="t" style="top:490.15px;font-size:14px;line-height:20px;color:#17191b;font-family:'Liberation Sans', sans-serif;letter-spacing:-0.300px;left:699px;">Patrick</div><div class="t" style="top:462.63px;font-size:15.5px;line-height:22px;color:#141516;font-family:'Liberation Sans', sans-serif;right:1612px;text-align:right;">30</div><div class="a" style="left:826px;top:489px;width:124px;height:21px;background:#3e6f80;border-radius:3px"></div><div class="t" style="top:490.15px;font-size:14px;line-height:20px;color:#17191b;font-family:'Liberation Sans', sans-serif;letter-spacing:-0.300px;left:827px;">Patrick</div><div class="t" style="top:462.63px;font-size:15.5px;line-height:22px;color:#5c5d5e;font-family:'Liberation Sans', sans-serif;right:1483px;text-align:right;">1</div><div class="a" style="left:955px;top:489px;width:124px;height:21px;background:#3e6f80;border-radius:3px"></div><div class="t" style="top:490.15px;font-size:14px;line-height:20px;color:#17191b;font-family:'Liberation Sans', sans-serif;letter-spacing:-0.300px;left:956px;">Patrick</div><div class="a" style="left:850px;top:611px;width:231px;height:33px;background:#181d24;border-radius:4px"></div><div class="t" style="top:617.45px;font-size:16px;line-height:22px;color:#a3a3a3;font-family:'Liberation Sans', sans-serif;letter-spacing:0.150px;right:1489px;text-align:right;">Confirm to borrow the plane</div><div class="a" style="left:383px;top:143px;width:498px;height:510px;background:#fff;border-radius:5px"></div><div class="t" style="top:160.89px;font-size:20.5px;line-height:29px;color:#212529;font-family:'Liberation Sans', sans-serif;left:399px;-webkit-text-stroke:0.35px #212529;">Borrow the plane</div><svg class="a" style="left:851px;top:169px;" width="11" height="11" viewBox="0 0 11 11"><path d="M1 1L10 10M10 1L1 10" stroke="#838383" stroke-width="2.2"/></svg><div class="a" style="left:383px;top:205px;width:498px;height:1px;background:#dee2e6;"></div><div class="t" style="top:224.45px;font-size:16px;line-height:22px;color:#212529;font-family:'Liberation Sans', sans-serif;letter-spacing:-0.450px;left:399px;">Date</div><div class="a" style="left:399px;top:254px;width:464px;height:36px;border:1px solid #ced4da;border-radius:4px;background:#fff"></div><div class="t" style="top:264.45px;font-size:16px;line-height:22px;color:#495057;font-family:'Liberation Sans', sans-serif;letter-spacing:-0.250px;left:412px;">2019-11-23</div><div class="t" style="top:310.45px;font-size:16px;line-height:22px;color:#212529;font-family:'Liberation Sans', sans-serif;letter-spacing:-0.450px;left:399px;">Start time</div><div class="a" style="left:399px;top:340px;width:464px;height:36px;border:1px solid #ced4da;border-radius:4px;background:#fff"></div><div class="t" style="top:350.45px;font-size:16px;line-height:22px;color:#495057;font-family:'Liberation Sans', sans-serif;letter-spacing:-0.250px;left:412px;">18:15:17</div><div class="t" style="top:396.45px;font-size:16px;line-height:22px;color:#212529;font-family:'Liberation Sans', sans-serif;letter-spacing:-0.450px;left:399px;">End time</div><div class="a" style="left:399px;top:426px;width:464px;height:36px;border:1px solid #ced4da;border-radius:4px;background:#fff"></div><div class="t" style="top:436.45px;font-size:16px;line-height:22px;color:#495057;font-family:'Liberation Sans', sans-serif;letter-spacing:-0.250px;left:412px;">22:21:16</div><div class="t" style="top:482.45px;font-size:16px;line-height:22px;color:#212529;font-family:'Liberation Sans', sans-serif;letter-spacing:-0.450px;left:399px;">Reason</div><div class="a" style="left:399px;top:512px;width:464px;height:36px;border:1px solid #80bdff;border-radius:4px;box-shadow:0 0 0 3px rgba(0,123,255,.25);background:#fff"></div><div class="t" style="top:522.45px;font-size:16px;line-height:22px;color:#495057;font-family:'Liberation Sans', sans-serif;letter-spacing:-0.250px;left:412px;">98+5dfghjk</div><svg class="a" style="left:434px;top:517px;" width="10" height="26" viewBox="0 0 10 26"><path d="M2 1h6M5 1v24M2 25h6" stroke="#000" stroke-width="1.2" fill="none"/><path d="M2.5 2h5M2.5 24h5" stroke="#fff" stroke-width="0.6"/></svg><svg class="a" style="left:440px;top:540px;" width="55" height="3" viewBox="0 0 55 3"><path d="M0 1L1 2L3 0L5 2L7 0L9 2L11 0L13 2L15 0L17 2L19 0L21 2L23 0L25 2L27 0L29 2L31 0L33 2L35 0L37 2L39 0L41 2L43 0L45 2L47 0L49 2L51 0L53 2" stroke="#e00" stroke-width="0.9" fill="none"/></svg><div class="a" style="left:383px;top:582px;width:498px;height:1px;background:#dee2e6;"></div><div class="a" style="left:708px;top:599px;width:76px;height:38px;background:#28a745;border-radius:4px"></div><div class="t" style="top:609.45px;font-size:16px;line-height:22px;color:#fff;font-family:'Liberation Sans', sans-serif;letter-spacing:-0.200px;left:708.0px;width:76px;text-align:center;">Submit</div><div class="a" style="left:792px;top:599px;width:73px;height:38px;background:#dc3545;border-radius:4px"></div><div class="t" style="top:609.45px;font-size:16px;line-height:22px;color:#fff;font-family:'Liberation Sans', sans-serif;letter-spacing:-0.450px;left:792.0px;width:73px;text-align:center;">Cancel</div><div class="a" style="left:1px;top:684px;width:1278px;height:1px;background:#494949;"></div><div class="a" style="left:1px;top:685px;width:1278px;height:26px;background:#333333;"></div><div class="a" style="left:1px;top:711px;width:1278px;height:1px;background:#3d3d3d;"></div><svg class="a" style="left:10px;top:691px;" width="15" height="15" viewBox="0 0 15 15"><path d="M5.5 12.5H1.5V1.5H12.5V5.5" stroke="#a0a0a0" stroke-width="1.3" fill="none"/><path d="M6 6l8 3-3.5 1 3.5 3.5-1 1L9.5 11 8.5 14z" fill="#a0a0a0"/></svg><svg class="a" style="left:36px;top:690px;" width="17" height="17" viewBox="0 0 17 17"><rect x="5.5" y="1" width="10" height="15" rx="1" fill="none" stroke="#a0a0a0" stroke-width="1.3"/><rect x="1" y="7" width="6" height="9" rx="0.8" fill="#333" stroke="#a0a0a0" stroke-width="1.3"/></svg><div class="a" style="left:63px;top:690px;width:1px;height:16px;background:#404040;"></div><div class="a" style="left:70px;top:685px;width:71px;height:26px;background:#000;"></div><div class="t" style="top:690.84px;font-size:12px;line-height:17px;color:#fff;font-family:'Liberation Sans', sans-serif;letter-spacing:-0.300px;left:81.5px;">Elements</div><div class="t" style="top:690.84px;font-size:12px;line-height:17px;color:#a8a8a8;font-family:'Liberation Sans', sans-serif;letter-spacing:-0.300px;left:152.5px;">Console</div><div class="t" style="top:690.84px;font-size:12px;line-height:17px;color:#a8a8a8;font-family:'Liberation Sans', sans-serif;letter-spacing:-0.300px;left:218px;">Sources</div><div class="t" style="top:690.84px;font-size:12px;line-height:17px;color:#a8a8a8;font-family:'Liberation Sans', sans-serif;letter-spacing:-0.300px;left:283px;">Network</div><div class="t" style="top:690.84px;font-size:12px;line-height:17px;color:#a8a8a8;font-family:'Liberation Sans', sans-serif;letter-spacing:-0.300px;left:352.5px;">Performance</div><div class="t" style="top:690.84px;font-size:12px;line-height:17px;color:#a8a8a8;font-family:'Liberation Sans', sans-serif;letter-spacing:-0.300px;left:442.5px;">Memory</div><div class="t" style="top:690.84px;font-size:12px;line-height:17px;color:#a8a8a8;font-family:'Liberation Sans', sans-serif;letter-spacing:-0.300px;left:510.75px;">Application</div><div class="t" style="top:690.84px;font-size:12px;line-height:17px;color:#a8a8a8;font-family:'Liberation Sans', sans-serif;letter-spacing:-0.300px;left:594.5px;">Security</div><div class="t" style="top:690.84px;font-size:12px;line-height:17px;color:#a8a8a8;font-family:'Liberation Sans', sans-serif;letter-spacing:-0.300px;left:660.5px;">Audits</div><div class="t" style="top:690.84px;font-size:12px;line-height:17px;color:#a8a8a8;font-family:'Liberation Sans', sans-serif;letter-spacing:-0.300px;left:717.5px;">Adblock Plus</div><svg class="a" style="left:1161px;top:692px;" width="13" height="13" viewBox="0 0 13 13"><circle cx="6.5" cy="6.5" r="6" fill="#e53935"/><path d="M4 4l5 5M9 4l-5 5" stroke="#fff" stroke-width="1.6"/></svg><div class="t" style="top:691.34px;font-size:12px;line-height:17px;color:#a8a8a8;font-family:'Liberation Sans', sans-serif;left:1176px;">8</div><svg class="a" style="left:1189px;top:692px;" width="13" height="12" viewBox="0 0 13 12"><path d="M6.5 0L13 12H0z" fill="#f4bd00"/><rect x="5.8" y="3.5" width="1.4" height="4.5" fill="#333"/><rect x="5.8" y="9" width="1.4" height="1.5" fill="#333"/></svg><div class="t" style="top:691.34px;font-size:12px;line-height:17px;color:#a8a8a8;font-family:'Liberation Sans', sans-serif;left:1203px;">2</div><div class="a" style="left:1216px;top:690px;width:1px;height:16px;background:#404040;"></div><svg class="a" style="left:1233px;top:692px;" width="4" height="13" viewBox="0 0 4 13"><circle cx="2" cy="2" r="1.5" fill="#a0a0a0"/><circle cx="2" cy="6.5" r="1.5" fill="#a0a0a0"/><circle cx="2" cy="11" r="1.5" fill="#a0a0a0"/></svg><svg class="a" style="left:1257px;top:693px;" width="11" height="11" viewBox="0 0 11 11"><path d="M1 1L10 10M10 1L1 10" stroke="#a0a0a0" stroke-width="1.5"/></svg><div class="a" style="left:1px;top:712px;width:939px;height:61px;background:#242424;"></div><div class="a" style="left:940px;top:712px;width:14px;height:61px;background:#2b2b2b;"></div><div class="a" style="left:941px;top:724px;width:12px;height:16px;background:#3c3c3c;"></div><div class="a" style="left:954px;top:712px;width:1px;height:83px;background:#3d3d3d;"></div><div class="a" style="left:1px;top:712px;width:939px;height:61px;overflow:hidden"><div class="t" style="top:1.57px;font-size:11px;line-height:15px;color:#a8a8a8;font-family:'Liberation Mono', monospace;left:74px;"><span style="color:#898989">&lt;!-- Modal --&gt;</span></div><div class="t" style="top:17.57px;font-size:11px;line-height:15px;color:#a8a8a8;font-family:'Liberation Mono', monospace;left:74px;"><span style="color:#5db0d7">&lt;div </span><span style="color:#9bbbdc">class</span><span style="color:#5db0d7">="</span><span style="color:#f29766">modal fade show</span><span style="color:#5db0d7">" </span><span style="color:#9bbbdc">id</span><span style="color:#5db0d7">="</span><span style="color:#f29766">borrowModal</span><span style="color:#5db0d7">" </span><span style="color:#9bbbdc">tabindex</span><span style="color:#5db0d7">="</span><span style="color:#f29766">-1</span><span style="color:#5db0d7">" </span><span style="color:#9bbbdc">role</span><span style="color:#5db0d7">="</span><span style="color:#f29766">dialog</span><span style="color:#5db0d7">" </span><span style="color:#9bbbdc">aria-labelledby</span><span style="color:#5db0d7">="</span><span style="color:#f29766">borrowModalLabel</span><span style="color:#5db0d7">" </span><span style="color:#9bbbdc">style</span><span style="color:#5db0d7">="</span><span style="color:#f29766">display: block;</span></div><div class="t" style="top:32.57px;font-size:11px;line-height:15px;color:#a8a8a8;font-family:'Liberation Mono', monospace;left:63px;"><span style="color:#f29766">padding-right: 17px;</span><span style="color:#5db0d7">" </span><span style="color:#9bbbdc">aria-modal</span><span style="color:#5db0d7">="</span><span style="color:#f29766">true</span><span style="color:#5db0d7">"&gt;</span></div><div class="t" style="top:48.57px;font-size:11px;line-height:15px;color:#a8a8a8;font-family:'Liberation Mono', monospace;left:86px;"><span style="color:#5db0d7">&lt;div </span><span style="color:#9bbbdc">class</span><span style="color:#5db0d7">="</span><span style="color:#f29766">modal-dialog modal-dialog-centered</span><span style="color:#5db0d7">" </span><span style="color:#9bbbdc">role</span><span style="color:#5db0d7">="</span><span style="color:#f29766">document</span><span style="color:#5db0d7">"&gt;</span></div><svg class="a" style="left:63px;top:20px;" width="8" height="7" viewBox="0 0 8 7"><path d="M0 0h8L4 7z" fill="#a0a0a0"/></svg><svg class="a" style="left:76px;top:51px;" width="8" height="7" viewBox="0 0 8 7"><path d="M0 0h8L4 7z" fill="#a0a0a0"/></svg></div><div class="a" style="left:1px;top:773px;width:953px;height:1px;background:#3d3d3d;"></div><div class="a" style="left:1px;top:774px;width:953px;height:21px;background:#242424;"></div><div class="a" style="left:672px;top:774px;width:94px;height:21px;background:#3a3a3a;"></div><div class="t" style="top:777.34px;font-size:12px;line-height:17px;color:#5db0d7;font-family:'Liberation Sans', sans-serif;letter-spacing:-0.050px;left:8px;">html</div><div class="t" style="top:777.34px;font-size:12px;line-height:17px;color:#5db0d7;font-family:'Liberation Sans', sans-serif;letter-spacing:-0.050px;left:46px;">body</div><div class="t" style="top:777.34px;font-size:12px;line-height:17px;color:#5db0d7;font-family:'Liberation Sans', sans-serif;letter-spacing:-0.050px;left:87px;">main</div><div class="t" style="top:777.34px;font-size:12px;line-height:17px;color:#5db0d7;font-family:'Liberation Sans', sans-serif;letter-spacing:-0.050px;left:127.5px;">div</div><div class="t" style="top:777.34px;font-size:12px;line-height:17px;color:#5db0d7;font-family:'Liberation Sans', sans-serif;letter-spacing:-0.050px;left:157px;">div</div><div class="t" style="top:777.34px;font-size:12px;line-height:17px;color:#d8d8d8;font-family:'Liberation Sans', sans-serif;letter-spacing:-0.050px;left:187px;">#borrowModal</div><div class="t" style="top:777.34px;font-size:12px;line-height:17px;color:#5db0d7;font-family:'Liberation Sans', sans-serif;letter-spacing:-0.050px;left:279.5px;">div</div><div class="t" style="top:777.34px;font-size:12px;line-height:17px;color:#5db0d7;font-family:'Liberation Sans', sans-serif;letter-spacing:-0.050px;left:309.5px;">div.modal-content</div><div class="t" style="top:777.34px;font-size:12px;line-height:17px;color:#d8d8d8;font-family:'Liberation Sans', sans-serif;letter-spacing:-0.050px;left:420.75px;"><span style="color:#5db0d7">form</span>#borrowBookingsForm</div><div class="t" style="top:777.34px;font-size:12px;line-height:17px;color:#5db0d7;font-family:'Liberation Sans', sans-serif;letter-spacing:-0.050px;left:581.25px;">div.modal-body</div><div class="t" style="top:777.34px;font-size:12px;line-height:17px;color:#d8d8d8;font-family:'Liberation Sans', sans-serif;letter-spacing:-0.050px;left:678.75px;">div.form-group</div><div class="a" style="left:955px;top:712px;width:324px;height:26px;background:#333333;"></div><div class="a" style="left:955px;top:712px;width:50px;height:26px;background:#000;"></div><div class="t" style="top:717.34px;font-size:12px;line-height:17px;color:#fff;font-family:'Liberation Sans', sans-serif;letter-spacing:-0.300px;left:964.5px;">Styles</div><div class="t" style="top:717.34px;font-size:12px;line-height:17px;color:#a8a8a8;font-family:'Liberation Sans', sans-serif;letter-spacing:-0.300px;left:1014px;">Computed</div><div class="t" style="top:717.34px;font-size:12px;line-height:17px;color:#a8a8a8;font-family:'Liberation Sans', sans-serif;letter-spacing:-0.300px;left:1090px;">Event Listeners</div><svg class="a" style="left:1187px;top:721px;" width="10" height="9" viewBox="0 0 10 9"><path d="M1 1l3.5 3.5L1 8M5 1l3.5 3.5L5 8" stroke="#a0a0a0" stroke-width="1.3" fill="none"/></svg><div class="a" style="left:955px;top:738px;width:324px;height:1px;background:#3d3d3d;"></div><div class="a" style="left:955px;top:739px;width:310px;height:26px;background:#333333;"></div><div class="a" style="left:958px;top:742px;width:199px;height:20px;background:#242424;"></div><div class="t" style="top:744.34px;font-size:12px;line-height:17px;color:#6f6f6f;font-family:'Liberation Sans', sans-serif;letter-spacing:-0.300px;left:962px;">Filter</div><div class="t" style="top:744.94px;font-size:11.5px;line-height:16px;color:#c8c8c8;font-family:'Liberation Mono', monospace;letter-spacing:-0.600px;left:1168px;">:hov</div><div class="t" style="top:744.94px;font-size:11.5px;line-height:16px;color:#c8c8c8;font-family:'Liberation Mono', monospace;letter-spacing:-0.600px;left:1205px;">.cls</div><svg class="a" style="left:1243px;top:745px;" width="12" height="12" viewBox="0 0 12 12"><path d="M6 1V11M1 6H11" stroke="#c8c8c8" stroke-width="1.4"/></svg><div class="a" style="left:1265px;top:739px;width:14px;height:56px;background:#2b2b2b;"></div><div class="a" style="left:1266px;top:740px;width:12px;height:15px;background:#3c3c3c;"></div><div class="a" style="left:955px;top:765px;width:310px;height:30px;background:#242424;"></div><div class="t" style="top:768.57px;font-size:11px;line-height:15px;color:#a8a8a8;font-family:'Liberation Mono', monospace;left:959px;">element.style {</div><div class="t" style="top:784.57px;font-size:11px;line-height:15px;color:#a8a8a8;font-family:'Liberation Mono', monospace;left:959px;">}</div><div class="a" style="left:1px;top:795px;width:1278px;height:1px;background:#3d3d3d;"></div><div class="a" style="left:1px;top:796px;width:1278px;height:26px;background:#333333;"></div><svg class="a" style="left:15px;top:801px;" width="4" height="15" viewBox="0 0 4 15"><circle cx="2" cy="2" r="1.5" fill="#a0a0a0"/><circle cx="2" cy="7.5" r="1.5" fill="#a0a0a0"/><circle cx="2" cy="13" r="1.5" fill="#a0a0a0"/></svg><div class="a" style="left:29px;top:796px;width:62px;height:26px;background:#000;"></div><div class="t" style="top:801.84px;font-size:12px;line-height:17px;color:#fff;font-family:'Liberation Sans', sans-serif;letter-spacing:-0.300px;left:38.5px;">Console</div><div class="t" style="top:801.84px;font-size:12px;line-height:17px;color:#a8a8a8;font-family:'Liberation Sans', sans-serif;letter-spacing:-0.300px;left:100.5px;">What's New</div><svg class="a" style="left:1257px;top:804px;" width="11" height="11" viewBox="0 0 11 11"><path d="M1 1L10 10M10 1L1 10" stroke="#a0a0a0" stroke-width="1.5"/></svg><div class="a" style="left:1px;top:822px;width:1278px;height:1px;background:#3d3d3d;"></div><div class="a" style="left:1px;top:823px;width:1278px;height:26px;background:#333333;"></div><svg class="a" style="left:9px;top:829px;" width="16" height="14" viewBox="0 0 16 14"><rect x="0.6" y="0.6" width="14.8" height="12.8" fill="none" stroke="#a0a0a0" stroke-width="1.2"/><path d="M4.5 1v12" stroke="#a0a0a0" stroke-width="1.2"/><path d="M7 4l4 3-4 3z" fill="#a0a0a0"/></svg><svg class="a" style="left:38px;top:829px;" width="14" height="14" viewBox="0 0 14 14"><circle cx="7" cy="7" r="5.8" fill="none" stroke="#a0a0a0" stroke-width="1.8"/><path d="M3 3l8 8" stroke="#a0a0a0" stroke-width="1.8"/></svg><div class="a" style="left:63px;top:828px;width:1px;height:16px;background:#404040;"></div><div class="t" style="top:829.34px;font-size:12px;line-height:17px;color:#a8a8a8;font-family:'Liberation Sans', sans-serif;letter-spacing:-0.300px;left:73px;">top</div><svg class="a" style="left:193px;top:832px;" width="9" height="7" viewBox="0 0 9 7"><path d="M0 0h9L4.5 7z" fill="#a0a0a0"/></svg><div class="a" style="left:210px;top:828px;width:1px;height:16px;background:#404040;"></div><svg class="a" style="left:220px;top:831px;" width="17" height="11" viewBox="0 0 17 11"><path d="M0.5 5.5Q8.5 -3 16.5 5.5Q8.5 14 0.5 5.5z" fill="#a0a0a0"/><circle cx="8.5" cy="5.5" r="3" fill="#333"/><circle cx="8.5" cy="5.5" r="1.5" fill="#a0a0a0"/></svg><div class="a" style="left:247px;top:828px;width:1px;height:16px;background:#404040;"></div><div class="a" style="left:255px;top:827px;width:262px;height:19px;background:#242424;"></div><div class="t" style="top:829.34px;font-size:12px;line-height:17px;color:#6f6f6f;font-family:'Liberation Sans', sans-serif;letter-spacing:-0.300px;left:259px;">Filter</div><div class="t" style="top:829.34px;font-size:12px;line-height:17px;color:#a8a8a8;font-family:'Liberation Sans', sans-serif;letter-spacing:-0.300px;left:525px;">Default levels</div><svg class="a" style="left:601px;top:832px;" width="8" height="7" viewBox="0 0 8 7"><path d="M0 0h8L4 7z" fill="#a0a0a0"/></svg><div class="a" style="left:1186px;top:828px;width:1px;height:16px;background:#404040;"></div><div class="t" style="top:829.34px;font-size:12px;line-height:17px;color:#a8a8a8;font-family:'Liberation Sans', sans-serif;letter-spacing:-0.300px;left:1197px;">1 hidden</div><svg class="a" style="left:1255px;top:829px;" width="15" height="15" viewBox="0 0 15 15"><circle cx="7.5" cy="7.5" r="5" fill="none" stroke="#a0a0a0" stroke-width="3.2" stroke-dasharray="2.6 1.3"/><circle cx="7.5" cy="7.5" r="4.2" fill="none" stroke="#a0a0a0" stroke-width="2"/></svg><div class="a" style="left:1px;top:849px;width:1278px;height:1px;background:#3d3d3d;"></div><div class="a" style="left:1px;top:850px;width:1278px;height:45px;background:#333333;"></div><svg class="a" style="left:9px;top:858px;" width="9" height="9" viewBox="0 0 9 9"><path d="M1 1L8 8M8 1L1 8" stroke="#a0a0a0" stroke-width="1.3"/></svg><div class="t" style="top:855.57px;font-size:11px;line-height:15px;color:#6a6a6a;font-family:'Liberation Mono', monospace;left:25px;">Expression</div><div class="t" style="top:875.57px;font-size:11px;line-height:15px;color:#dcdcdc;font-family:'Liberation Mono', monospace;left:25px;">not available</div><div class="a" style="left:1px;top:895px;width:1278px;height:1px;background:#404040;"></div><div class="a" style="left:1px;top:896px;width:1264px;height:143px;overflow:hidden;background:#242424"><div class="a" style="left:0px;top:0px;width:1264px;height:56px;background:#290000;"></div><div class="a" style="left:0px;top:22px;width:1264px;height:1px;background:#5c0000;"></div><div class="a" style="left:0px;top:56px;width:1264px;height:1px;background:#665500;"></div><div class="a" style="left:0px;top:57px;width:1264px;height:19px;background:#332a00;"></div><div class="a" style="left:0px;top:76px;width:1264px;height:1px;background:#665500;"></div><div class="a" style="left:0px;top:77px;width:1264px;height:19px;background:#332a00;"></div><div class="a" style="left:0px;top:96px;width:1264px;height:1px;background:#665500;"></div><div class="a" style="left:0px;top:116px;width:1264px;height:1px;background:#3a3a3a;"></div><div class="t" style="top:-6.43px;font-size:11px;line-height:15px;color:#fe8d8d;font-family:'Liberation Mono', monospace;left:51px;">at <u>main.js:10</u></div><div class="t" style="top:6.57px;font-size:11px;line-height:15px;color:#fe8d8d;font-family:'Liberation Mono', monospace;left:51px;">at <u style="color:#d0b0b0">main.js:11</u></div><svg class="a" style="left:7px;top:27px;" width="12" height="12" viewBox="0 0 12 12"><circle cx="6" cy="6" r="5.8" fill="#e53935"/><path d="M3.7 3.7l4.6 4.6M8.3 3.7l-4.6 4.6" stroke="#fff" stroke-width="1.5"/></svg><svg class="a" style="left:27px;top:29px;" width="6" height="8" viewBox="0 0 6 8"><path d="M0 0l6 4-6 4z" fill="#a0a0a0"/></svg><div class="t" style="top:26.57px;font-size:11px;line-height:15px;color:#fe8d8d;font-family:'Liberation Mono', monospace;left:35px;">Uncaught ReferenceError: module is not defined</div><div class="t" style="top:40.57px;font-size:11px;line-height:15px;color:#fe8d8d;font-family:'Liberation Mono', monospace;left:51px;">at <u style="color:#d0b0b0">index.js:274</u></div><div class="t" style="top:26.57px;font-size:11px;line-height:15px;color:#cfcfcf;font-family:'Liberation Mono', monospace;left:1156px;"><u>index.js:274</u></div><svg class="a" style="left:7px;top:60px;" width="12" height="11" viewBox="0 0 12 11"><path d="M6 0L12 11H0z" fill="#f4bd00"/><rect x="5.3" y="3.2" width="1.4" height="4" fill="#332a00"/><rect x="5.3" y="8" width="1.4" height="1.5" fill="#332a00"/></svg><svg class="a" style="left:27px;top:63px;" width="6" height="8" viewBox="0 0 6 8"><path d="M0 0l6 4-6 4z" fill="#a0a0a0"/></svg><div class="t" style="top:60.57px;font-size:11px;line-height:15px;color:#f8dc9c;font-family:'Liberation Mono', monospace;left:35px;">Plugin file not loaded for interaction</div><div class="t" style="top:60.57px;font-size:11px;line-height:15px;color:#cfcfcf;font-family:'Liberation Mono', monospace;left:1155px;"><u>main.js:4569</u></div><svg class="a" style="left:7px;top:80px;" width="12" height="11" viewBox="0 0 12 11"><path d="M6 0L12 11H0z" fill="#f4bd00"/><rect x="5.3" y="3.2" width="1.4" height="4" fill="#332a00"/><rect x="5.3" y="8" width="1.4" height="1.5" fill="#332a00"/></svg><svg class="a" style="left:27px;top:83px;" width="6" height="8" viewBox="0 0 6 8"><path d="M0 0l6 4-6 4z" fill="#a0a0a0"/></svg><div class="t" style="top:80.57px;font-size:11px;line-height:15px;color:#f8dc9c;font-family:'Liberation Mono', monospace;left:35px;">Plugin file not loaded for resourceTimeGridDay</div><div class="t" style="top:80.57px;font-size:11px;line-height:15px;color:#cfcfcf;font-family:'Liberation Mono', monospace;left:1155px;"><u>main.js:4569</u></div><div class="t" style="top:100.57px;font-size:11px;line-height:15px;color:#9980ff;font-family:'Liberation Mono', monospace;left:25px;">0</div><div class="t" style="top:100.57px;font-size:11px;line-height:15px;color:#cfcfcf;font-family:'Liberation Mono', monospace;left:1161.5px;"><u>(index):411</u></div><svg class="a" style="left:9px;top:121px;" width="6" height="9" viewBox="0 0 6 9"><path d="M1 1l3.5 3.5L1 8" stroke="#4d90fe" stroke-width="1.5" fill="none"/></svg></div><div class="a" style="left:1265px;top:896px;width:14px;height:143px;background:#2b2b2b;"></div><div class="a" style="left:1266px;top:973px;width:12px;height:60px;background:#3c3c3c;"></div><div class="a" style="left:0px;top:1039px;width:1280px;height:1px;background:#6b6043;"></div><div class="a" style="left:1280px;top:0px;width:1280px;height:1040px;background:#3c3f41;"></div><svg class="a" style="left:1289px;top:6px;" width="17" height="17" viewBox="0 0 17 17"><rect x="0.5" y="0.5" width="16" height="16" fill="#000" stroke="#b345f1" stroke-width="1"/><text x="3" y="9" font-size="7.5" font-weight="700" fill="#fff" font-family="Liberation Sans">PS</text><rect x="3" y="12" width="6" height="1.3" fill="#fff"/></svg><div class="t" style="top:6.49px;font-size:13px;line-height:18px;color:#bbbbbb;font-family:'Liberation Sans', sans-serif;letter-spacing:-0.450px;left:1318.75px;"><span style="text-decoration:underline;text-underline-offset:2px;text-decoration-thickness:1px"</span>F</span>ile</div><div class="t" style="top:6.49px;font-size:13px;line-height:18px;color:#bbbbbb;font-family:'Liberation Sans', sans-serif;letter-spacing:-0.450px;left:1350px;"><span style="text-decoration:underline;text-underline-offset:2px;text-decoration-thickness:1px"</span>E</span>dit</div><div class="t" style="top:6.49px;font-size:13px;line-height:18px;color:#bbbbbb;font-family:'Liberation Sans', sans-serif;letter-spacing:-0.450px;left:1382.75px;"><span style="text-decoration:underline;text-underline-offset:2px;text-decoration-thickness:1px"</span>V</span>iew</div><div class="t" style="top:6.49px;font-size:13px;line-height:18px;color:#bbbbbb;font-family:'Liberation Sans', sans-serif;letter-spacing:-0.450px;left:1420px;"><span style="text-decoration:underline;text-underline-offset:2px;text-decoration-thickness:1px"</span>N</span>avigate</div><div class="t" style="top:6.49px;font-size:13px;line-height:18px;color:#bbbbbb;font-family:'Liberation Sans', sans-serif;letter-spacing:-0.450px;left:1479px;"><span style="text-decoration:underline;text-underline-offset:2px;text-decoration-thickness:1px"</span>C</span>ode</div><div class="t" style="top:6.49px;font-size:13px;line-height:18px;color:#bbbbbb;font-family:'Liberation Sans', sans-serif;letter-spacing:-0.450px;left:1520px;"><span style="text-decoration:underline;text-underline-offset:2px;text-decoration-thickness:1px"</span>R</span>efactor</div><div class="t" style="top:6.49px;font-size:13px;line-height:18px;color:#bbbbbb;font-family:'Liberation Sans', sans-serif;letter-spacing:-0.450px;left:1577px;">R<span style="text-decoration:underline;text-underline-offset:2px;text-decoration-thickness:1px"</span>u</span>n</div><div class="t" style="top:6.49px;font-size:13px;line-height:18px;color:#bbbbbb;font-family:'Liberation Sans', sans-serif;letter-spacing:-0.450px;left:1610px;"><span style="text-decoration:underline;text-underline-offset:2px;text-decoration-thickness:1px"</span>T</span>ools</div><div class="t" style="top:6.49px;font-size:13px;line-height:18px;color:#bbbbbb;font-family:'Liberation Sans', sans-serif;letter-spacing:-0.450px;left:1650.75px;">VC<span style="text-decoration:underline;text-underline-offset:2px;text-decoration-thickness:1px"</span>S</span></div><div class="t" style="top:6.49px;font-size:13px;line-height:18px;color:#bbbbbb;font-family:'Liberation Sans', sans-serif;letter-spacing:-0.450px;left:1683.75px;"><span style="text-decoration:underline;text-underline-offset:2px;text-decoration-thickness:1px"</span>W</span>indow</div><div class="t" style="top:6.49px;font-size:13px;line-height:18px;color:#bbbbbb;font-family:'Liberation Sans', sans-serif;letter-spacing:-0.450px;left:1740.75px;"><span style="text-decoration:underline;text-underline-offset:2px;text-decoration-thickness:1px"</span>H</span>elp</div><div class="t" style="top:6.49px;font-size:13px;line-height:18px;color:#878787;font-family:'Liberation Sans', sans-serif;letter-spacing:-0.420px;left:1793px;">n939sr-clone [C:\Users\2lemon-pc-1\Local Sites\n939sr-clone] - ...\wp-content\themes\2lemon\page-bookings.php</div><div class="a" style="left:2435px;top:14px;width:11px;height:1px;background:#a0a0a0;"></div><div class="a" style="left:2483px;top:9px;width:9px;height:9px;border:1px solid #a0a0a0"></div><svg class="a" style="left:2529px;top:8px;" width="12" height="12" viewBox="0 0 12 12"><path d="M1 1L11 11M11 1L1 11" stroke="#a0a0a0" stroke-width="1.1"/></svg><div class="a" style="left:1280px;top:28px;width:1280px;height:1px;background:#4b4d4f;"></div><svg class="a" style="left:1290.75px;top:37px;" width="15" height="12" viewBox="0 0 15 12"><path d="M0 0H6L7.5 2H15V12H0Z" fill="#8c9aa3"/></svg><div class="t" style="top:35.49px;font-size:13px;line-height:18px;color:#bbbbbb;font-family:'Liberation Sans', sans-serif;font-weight:700;letter-spacing:-0.550px;left:1308.75px;">n939sr-clone</div><svg class="a" style="left:1388px;top:37px;" width="6" height="14" viewBox="0 0 6 14"><path d="M1 0L5 7 1 14" stroke="#5e6164" stroke-width="1" fill="none"/></svg><svg class="a" style="left:1396px;top:37px;" width="15" height="12" viewBox="0 0 15 12"><path d="M0 0H6L7.5 2H15V12H0Z" fill="#8c9aa3"/></svg><div class="t" style="top:35.49px;font-size:13px;line-height:18px;color:#bbbbbb;font-family:'Liberation Sans', sans-serif;letter-spacing:-0.400px;left:1414px;">app</div><svg class="a" style="left:1440px;top:37px;" width="6" height="14" viewBox="0 0 6 14"><path d="M1 0L5 7 1 14" stroke="#5e6164" stroke-width="1" fill="none"/></svg><svg class="a" style="left:1448px;top:37px;" width="15" height="12" viewBox="0 0 15 12"><path d="M0 0H6L7.5 2H15V12H0Z" fill="#8c9aa3"/></svg><div class="t" style="top:35.49px;font-size:13px;line-height:18px;color:#bbbbbb;font-family:'Liberation Sans', sans-serif;letter-spacing:-0.400px;left:1466px;">public</div><svg class="a" style="left:1505px;top:37px;" width="6" height="14" viewBox="0 0 6 14"><path d="M1 0L5 7 1 14" stroke="#5e6164" stroke-width="1" fill="none"/></svg><svg class="a" style="left:1512.5px;top:37px;" width="15" height="12" viewBox="0 0 15 12"><path d="M0 0H6L7.5 2H15V12H0Z" fill="#8c9aa3"/></svg><div class="t" style="top:35.49px;font-size:13px;line-height:18px;color:#bbbbbb;font-family:'Liberation Sans', sans-serif;letter-spacing:-0.400px;left:1530.75px;">wp-content</div><svg class="a" style="left:1598.75px;top:37px;" width="6" height="14" viewBox="0 0 6 14"><path d="M1 0L5 7 1 14" stroke="#5e6164" stroke-width="1" fill="none"/></svg><svg class="a" style="left:1607px;top:37px;" width="15" height="12" viewBox="0 0 15 12"><path d="M0 0H6L7.5 2H15V12H0Z" fill="#8c9aa3"/></svg><div class="t" style="top:35.49px;font-size:13px;line-height:18px;color:#bbbbbb;font-family:'Liberation Sans', sans-serif;letter-spacing:-0.400px;left:1625px;">themes</div><svg class="a" style="left:1670px;top:37px;" width="6" height="14" viewBox="0 0 6 14"><path d="M1 0L5 7 1 14" stroke="#5e6164" stroke-width="1" fill="none"/></svg><svg class="a" style="left:1677.5px;top:37px;" width="15" height="12" viewBox="0 0 15 12"><path d="M0 0H6L7.5 2H15V12H0Z" fill="#8c9aa3"/></svg><div class="t" style="top:35.49px;font-size:13px;line-height:18px;color:#bbbbbb;font-family:'Liberation Sans', sans-serif;letter-spacing:-0.400px;left:1695.75px;">2lemon</div><svg class="a" style="left:1740px;top:37px;" width="6" height="14" viewBox="0 0 6 14"><path d="M1 0L5 7 1 14" stroke="#5e6164" stroke-width="1" fill="none"/></svg><svg class="a" style="left:1750px;top:36px;" width="16" height="16" viewBox="0 0 16 16"><path d="M6 0H14V9H2V4Z" fill="#9aa7b0"/><path d="M2 4L6 0V4Z" fill="#3c3f41"/><rect x="0" y="9" width="16" height="7" fill="#b99bf8"/><text x="8" y="15.3" font-size="6.5" font-weight="700" text-anchor="middle" fill="#3c3f41" font-family="Liberation Sans">PHP</text></svg><div class="t" style="top:35.49px;font-size:13px;line-height:18px;color:#bbbbbb;font-family:'Liberation Sans', sans-serif;letter-spacing:-0.400px;left:1768.25px;">page-bookings.php</div><div class="a" style="left:2240px;top:32px;width:121px;height:20px;border:1px solid #5e6060;border-radius:3px"></div><div class="t" style="top:35.49px;font-size:13px;line-height:18px;color:#bbbbbb;font-family:'Liberation Sans', sans-serif;letter-spacing:-0.370px;left:2247.5px;">Add Configuration...</div><svg class="a" style="left:2376px;top:36px;" width="11" height="13" viewBox="0 0 11 13"><path d="M0 0L11 6.5 0 13Z" fill="#5a5d5f"/></svg><svg class="a" style="left:2399px;top:35px;" width="14" height="15" viewBox="0 0 14 15"><ellipse cx="7" cy="9" rx="4.5" ry="5.5" fill="#5a5d5f"/><path d="M0 6h14M0 10h14M1 14l3-2M13 14l-3-2" stroke="#5a5d5f" stroke-width="1.4"/></svg><svg class="a" style="left:2425px;top:35px;" width="16" height="15" viewBox="0 0 16 15"><path d="M1 2h7v11H1z" fill="#5a5d5f"/><path d="M8 6L15 10.5 8 15Z" fill="#5a5d5f"/></svg><svg class="a" style="left:2451px;top:34px;" width="16" height="17" viewBox="0 0 16 17"><circle cx="4" cy="3.5" r="3" fill="none" stroke="#c75450" stroke-width="1.2"/><path d="M2 5.5l4-4" stroke="#c75450" stroke-width="1.2"/><ellipse cx="4.5" cy="12" rx="3.5" ry="4" fill="#499c54"/><path d="M10 3h3v12h-3" stroke="#a9b7c6" stroke-width="1.6" fill="none"/></svg><div class="a" style="left:2478px;top:37px;width:12px;height:12px;background:#5a5d5f;"></div><div class="a" style="left:2501px;top:34px;width:1px;height:18px;background:#515151;"></div><svg class="a" style="left:2510px;top:36px;" width="15" height="13" viewBox="0 0 15 13"><rect x="0.7" y="0.7" width="13.6" height="11.6" fill="none" stroke="#a9b7c6" stroke-width="1.4"/><rect x="0.7" y="0.7" width="13.6" height="2.5" fill="#a9b7c6"/><path d="M5 5l4 2.5L5 10z" fill="#499c54"/></svg><svg class="a" style="left:2536px;top:35px;" width="15" height="15" viewBox="0 0 15 15"><circle cx="6" cy="6" r="4.5" fill="none" stroke="#bbbbbb" stroke-width="1.8"/><path d="M9.3 9.3L14 14" stroke="#bbbbbb" stroke-width="2.2"/></svg><div class="a" style="left:1280px;top:57px;width:1280px;height:1px;background:#323232;"></div><div class="a" style="left:1280px;top:58px;width:22px;height:961px;background:#3c3f41;"></div><div class="a" style="left:1280px;top:58px;width:22px;height:87px;background:#2d2f30;"></div><div class="a" style="left:1302px;top:58px;width:1px;height:961px;background:#323232;"></div><div class="t" style="left:1280px;top:58px;width:22px;height:87px;"><div style="position:absolute;left:3px;top:57px;transform:rotate(-90deg);transform-origin:0 0;font:12px/16px 'Liberation Sans', sans-serif;letter-spacing:-0.3px;color:#dddddd;white-space:nowrap"><u>1</u>: Project</div></div><svg class="a" style="left:1285px;top:120px;" width="15" height="12" viewBox="0 0 15 12"><path d="M0 0H6L7.5 2H15V12H0Z" fill="#a0a6aa"/></svg><div class="t" style="left:1280px;top:810px;width:22px;height:80px;"><div style="position:absolute;left:3px;top:68px;transform:rotate(-90deg);transform-origin:0 0;font:12px/16px 'Liberation Sans', sans-serif;letter-spacing:-0.3px;color:#bbbbbb;white-space:nowrap"><u>7</u>: Structure</div></div><svg class="a" style="left:1287px;top:878px;" width="11" height="11" viewBox="0 0 11 11"><rect x="5" y="0" width="5" height="5" fill="#a0a6aa"/><rect x="0" y="6" width="5" height="5" fill="#a0a6aa"/><rect x="6" y="6" width="5" height="5" fill="#a0a6aa"/></svg><div class="t" style="left:1280px;top:905px;width:22px;height:80px;"><div style="position:absolute;left:3px;top:62px;transform:rotate(-90deg);transform-origin:0 0;font:12px/16px 'Liberation Sans', sans-serif;letter-spacing:-0.3px;color:#bbbbbb;white-space:nowrap"><u>2</u>: Favorites</div></div><svg class="a" style="left:1286px;top:971px;" width="13" height="13" viewBox="0 0 13 13"><path d="M6.5 0l1.9 4.3 4.6.4-3.5 3 1.1 4.6-4.1-2.4-4.1 2.4 1.1-4.6-3.5-3 4.6-.4z" fill="#a0a6aa"/></svg><div class="a" style="left:1303px;top:58px;width:310px;height:26px;background:#3c3f41;"></div><div class="a" style="left:1303px;top:84px;width:310px;height:1px;background:#323232;"></div><svg class="a" style="left:1312px;top:65px;" width="15" height="14" viewBox="0 0 15 14"><rect x="0.5" y="0.5" width="14" height="13" fill="none" stroke="#8c9aa3"/><rect x="2" y="3" width="11" height="9" fill="#3592c4"/></svg><div class="t" style="top:63.49px;font-size:13px;line-height:18px;color:#bbbbbb;font-family:'Liberation Sans', sans-serif;letter-spacing:-0.400px;left:1331px;">Project</div><svg class="a" style="left:1377px;top:69px;" width="9" height="6" viewBox="0 0 9 6"><path d="M0 0h9L4.5 6z" fill="#a0a0a0"/></svg><svg class="a" style="left:1507px;top:63px;" width="16" height="16" viewBox="0 0 16 16"><circle cx="8" cy="8" r="6.4" fill="none" stroke="#bfc1c3" stroke-width="1.5"/><path d="M8 2v4.3M8 9.7V14M2 8h4.3M9.7 8H14" stroke="#bfc1c3" stroke-width="1.6"/></svg><svg class="a" style="left:1534px;top:63px;" width="14" height="16" viewBox="0 0 14 16"><path d="M3.7 1.9h6.4L6.9 5.2z" fill="#bfc1c3"/><rect x="1" y="6.8" width="12" height="2.2" fill="#bfc1c3"/><path d="M3.7 14h6.4L6.9 10.8z" fill="#bfc1c3"/></svg><div class="a" style="left:1557px;top:61px;width:1px;height:20px;background:#515151;"></div><svg class="a" style="left:1566px;top:63px;" width="16" height="16" viewBox="0 0 16 16"><rect x="6.6" y="1.2" width="2.8" height="3" transform="rotate(0 8 8)" fill="#a0a6aa"/><rect x="6.6" y="1.2" width="2.8" height="3" transform="rotate(60 8 8)" fill="#a0a6aa"/><rect x="6.6" y="1.2" width="2.8" height="3" transform="rotate(120 8 8)" fill="#a0a6aa"/><rect x="6.6" y="1.2" width="2.8" height="3" transform="rotate(180 8 8)" fill="#a0a6aa"/><rect x="6.6" y="1.2" width="2.8" height="3" transform="rotate(240 8 8)" fill="#a0a6aa"/><rect x="6.6" y="1.2" width="2.8" height="3" transform="rotate(300 8 8)" fill="#a0a6aa"/><circle cx="8" cy="8" r="4.6" fill="#bfc1c3"/><circle cx="8" cy="8" r="1.9" fill="#3c3f41"/></svg><div class="a" style="left:1594px;top:70px;width:12px;height:2px;background:#bfc1c3;"></div><div class="a" style="left:1303px;top:85px;width:310px;height:910px;overflow:hidden"><svg class="a" style="left:111px;top:6px;" width="8" height="10" viewBox="0 0 8 10"><path d="M0 0L8 5 0 10Z" fill="#a0a0a0"/></svg><svg class="a" style="left:129px;top:5px;" width="15" height="12" viewBox="0 0 15 12"><path d="M0 0H6L7.5 2H15V12H0Z" fill="#8c9aa3"/></svg><div class="t" style="top:2.49px;font-size:13px;line-height:18px;color:#bbbbbb;font-family:'Liberation Sans', sans-serif;letter-spacing:-0.450px;left:147px;">types</div><svg class="a" style="left:129px;top:23px;" width="16" height="16" viewBox="0 0 16 16"><path d="M6 0H14V9H2V4Z" fill="#9aa7b0"/><path d="M2 4L6 0V4Z" fill="#3c3f41"/><rect x="0" y="9" width="16" height="7" fill="#40b6e0"/><text x="8" y="15.3" font-size="6.5" font-weight="700" text-anchor="middle" fill="#3c3f41" font-family="Liberation Sans">MD</text></svg><div class="t" style="top:22.49px;font-size:13px;line-height:18px;color:#bbbbbb;font-family:'Liberation Sans', sans-serif;letter-spacing:-0.450px;left:147px;">CHANGELOG.md</div><svg class="a" style="left:130px;top:43px;" width="14" height="16" viewBox="0 0 14 16"><path d="M4 0H13V16H1V3Z" fill="#9aa7b0"/><path d="M3.5 6h7M3.5 9h7M3.5 12h7" stroke="#3c3f41" stroke-width="1.2"/></svg><div class="t" style="top:42.49px;font-size:13px;line-height:18px;color:#bbbbbb;font-family:'Liberation Sans', sans-serif;letter-spacing:-0.450px;left:147px;">LICENSE</div><svg class="a" style="left:130px;top:63px;" width="14" height="16" viewBox="0 0 14 16"><path d="M4 0H13V16H1V3Z" fill="#9aa7b0"/><text x="7" y="13" font-size="8" text-anchor="middle" fill="#3c3f41" font-family="Liberation Sans">{}</text></svg><div class="t" style="top:62.49px;font-size:13px;line-height:18px;color:#bbbbbb;font-family:'Liberation Sans', sans-serif;letter-spacing:-0.450px;left:147px;">package.json</div><svg class="a" style="left:129px;top:83px;" width="16" height="16" viewBox="0 0 16 16"><path d="M6 0H14V9H2V4Z" fill="#9aa7b0"/><path d="M2 4L6 0V4Z" fill="#3c3f41"/><rect x="0" y="9" width="16" height="7" fill="#40b6e0"/><text x="8" y="15.3" font-size="6.5" font-weight="700" text-anchor="middle" fill="#3c3f41" font-family="Liberation Sans">MD</text></svg><div class="t" style="top:82.49px;font-size:13px;line-height:18px;color:#bbbbbb;font-family:'Liberation Sans', sans-serif;letter-spacing:-0.450px;left:147px;">README.md</div><svg class="a" style="left:93px;top:106px;" width="8" height="10" viewBox="0 0 8 10"><path d="M0 0L8 5 0 10Z" fill="#a0a0a0"/></svg><svg class="a" style="left:111px;top:105px;" width="15" height="12" viewBox="0 0 15 12"><path d="M0 0H6L7.5 2H15V12H0Z" fill="#8c9aa3"/></svg><div class="t" style="top:102.49px;font-size:13px;line-height:18px;color:#bbbbbb;font-family:'Liberation Sans', sans-serif;letter-spacing:-0.450px;left:129px;">scss</div><svg class="a" style="left:111px;top:123px;" width="16" height="16" viewBox="0 0 16 16"><path d="M6 0H14V9H2V4Z" fill="#9aa7b0"/><path d="M2 4L6 0V4Z" fill="#3c3f41"/><rect x="0" y="9" width="16" height="7" fill="#b99bf8"/><text x="8" y="15.3" font-size="6.5" font-weight="700" text-anchor="middle" fill="#3c3f41" font-family="Liberation Sans">PHP</text></svg><div class="t" style="top:122.49px;font-size:13px;line-height:18px;color:#bbbbbb;font-family:'Liberation Sans', sans-serif;letter-spacing:-0.450px;left:129px;">404.php</div><svg class="a" style="left:111px;top:143px;" width="16" height="16" viewBox="0 0 16 16"><path d="M6 0H14V9H2V4Z" fill="#9aa7b0"/><path d="M2 4L6 0V4Z" fill="#3c3f41"/><rect x="0" y="9" width="16" height="7" fill="#b99bf8"/><text x="8" y="15.3" font-size="6.5" font-weight="700" text-anchor="middle" fill="#3c3f41" font-family="Liberation Sans">PHP</text></svg><div class="t" style="top:142.49px;font-size:13px;line-height:18px;color:#bbbbbb;font-family:'Liberation Sans', sans-serif;letter-spacing:-0.450px;left:129px;">archive.php</div><svg class="a" style="left:111px;top:163px;" width="16" height="16" viewBox="0 0 16 16"><circle cx="8" cy="8" r="8" fill="#389fd6"/><text x="8" y="11.8" font-size="10" text-anchor="middle" fill="#3c3f41" font-family="Liberation Sans">C</text></svg><div class="t" style="top:162.49px;font-size:13px;line-height:18px;color:#bbbbbb;font-family:'Liberation Sans', sans-serif;letter-spacing:-0.450px;left:129px;">bs4navwalker.php</div><svg class="a" style="left:111px;top:183px;" width="16" height="16" viewBox="0 0 16 16"><path d="M6 0H14V9H2V4Z" fill="#9aa7b0"/><path d="M2 4L6 0V4Z" fill="#3c3f41"/><rect x="0" y="9" width="16" height="7" fill="#b99bf8"/><text x="8" y="15.3" font-size="6.5" font-weight="700" text-anchor="middle" fill="#3c3f41" font-family="Liberation Sans">PHP</text></svg><div class="t" style="top:182.49px;font-size:13px;line-height:18px;color:#bbbbbb;font-family:'Liberation Sans', sans-serif;letter-spacing:-0.450px;left:129px;">footer.php</div><svg class="a" style="left:111px;top:203px;" width="16" height="16" viewBox="0 0 16 16"><path d="M6 0H14V9H2V4Z" fill="#9aa7b0"/><path d="M2 4L6 0V4Z" fill="#3c3f41"/><rect x="0" y="9" width="16" height="7" fill="#b99bf8"/><text x="8" y="15.3" font-size="6.5" font-weight="700" text-anchor="middle" fill="#3c3f41" font-family="Liberation Sans">PHP</text></svg><div class="t" style="top:202.49px;font-size:13px;line-height:18px;color:#bbbbbb;font-family:'Liberation Sans', sans-serif;letter-spacing:-0.450px;left:129px;">front-page.php</div><svg class="a" style="left:111px;top:223px;" width="16" height="16" viewBox="0 0 16 16"><path d="M6 0H14V9H2V4Z" fill="#9aa7b0"/><path d="M2 4L6 0V4Z" fill="#3c3f41"/><rect x="0" y="9" width="16" height="7" fill="#b99bf8"/><text x="8" y="15.3" font-size="6.5" font-weight="700" text-anchor="middle" fill="#3c3f41" font-family="Liberation Sans">PHP</text></svg><div class="t" style="top:222.49px;font-size:13px;line-height:18px;color:#bbbbbb;font-family:'Liberation Sans', sans-serif;letter-spacing:-0.450px;left:129px;">functions.php</div><svg class="a" style="left:111px;top:243px;" width="16" height="16" viewBox="0 0 16 16"><path d="M6 0H14V9H2V4Z" fill="#9aa7b0"/><path d="M2 4L6 0V4Z" fill="#3c3f41"/><rect x="0" y="9" width="16" height="7" fill="#b99bf8"/><text x="8" y="15.3" font-size="6.5" font-weight="700" text-anchor="middle" fill="#3c3f41" font-family="Liberation Sans">PHP</text></svg><div class="t" style="top:242.49px;font-size:13px;line-height:18px;color:#bbbbbb;font-family:'Liberation Sans', sans-serif;letter-spacing:-0.450px;left:129px;">header.php</div><svg class="a" style="left:111px;top:263px;" width="16" height="16" viewBox="0 0 16 16"><path d="M6 0H14V9H2V4Z" fill="#9aa7b0"/><path d="M2 4L6 0V4Z" fill="#3c3f41"/><rect x="0" y="9" width="16" height="7" fill="#b99bf8"/><text x="8" y="15.3" font-size="6.5" font-weight="700" text-anchor="middle" fill="#3c3f41" font-family="Liberation Sans">PHP</text></svg><div class="t" style="top:262.49px;font-size:13px;line-height:18px;color:#bbbbbb;font-family:'Liberation Sans', sans-serif;letter-spacing:-0.450px;left:129px;">header-front-page.php</div><svg class="a" style="left:111px;top:283px;" width="16" height="16" viewBox="0 0 16 16"><path d="M6 0H14V9H2V4Z" fill="#9aa7b0"/><path d="M2 4L6 0V4Z" fill="#3c3f41"/><rect x="0" y="9" width="16" height="7" fill="#b99bf8"/><text x="8" y="15.3" font-size="6.5" font-weight="700" text-anchor="middle" fill="#3c3f41" font-family="Liberation Sans">PHP</text></svg><div class="t" style="top:282.49px;font-size:13px;line-height:18px;color:#bbbbbb;font-family:'Liberation Sans', sans-serif;letter-spacing:-0.450px;left:129px;">home.php</div><svg class="a" style="left:111px;top:303px;" width="16" height="16" viewBox="0 0 16 16"><path d="M6 0H14V9H2V4Z" fill="#9aa7b0"/><path d="M2 4L6 0V4Z" fill="#3c3f41"/><rect x="0" y="9" width="16" height="7" fill="#b99bf8"/><text x="8" y="15.3" font-size="6.5" font-weight="700" text-anchor="middle" fill="#3c3f41" font-family="Liberation Sans">PHP</text></svg><div class="t" style="top:302.49px;font-size:13px;line-height:18px;color:#bbbbbb;font-family:'Liberation Sans', sans-serif;letter-spacing:-0.450px;left:129px;">index.php</div><svg class="a" style="left:111px;top:323px;" width="16" height="16" viewBox="0 0 16 16"><path d="M6 0H14V9H2V4Z" fill="#9aa7b0"/><path d="M2 4L6 0V4Z" fill="#3c3f41"/><rect x="0" y="9" width="16" height="7" fill="#b99bf8"/><text x="8" y="15.3" font-size="6.5" font-weight="700" text-anchor="middle" fill="#3c3f41" font-family="Liberation Sans">PHP</text></svg><div class="t" style="top:322.49px;font-size:13px;line-height:18px;color:#bbbbbb;font-family:'Liberation Sans', sans-serif;letter-spacing:-0.450px;left:129px;">page.php</div><svg class="a" style="left:111px;top:343px;" width="16" height="16" viewBox="0 0 16 16"><path d="M6 0H14V9H2V4Z" fill="#9aa7b0"/><path d="M2 4L6 0V4Z" fill="#3c3f41"/><rect x="0" y="9" width="16" height="7" fill="#b99bf8"/><text x="8" y="15.3" font-size="6.5" font-weight="700" text-anchor="middle" fill="#3c3f41" font-family="Liberation Sans">PHP</text></svg><div class="t" style="top:342.49px;font-size:13px;line-height:18px;color:#bbbbbb;font-family:'Liberation Sans', sans-serif;letter-spacing:-0.450px;left:129px;">page-admin.php</div><svg class="a" style="left:111px;top:363px;" width="16" height="16" viewBox="0 0 16 16"><path d="M6 0H14V9H2V4Z" fill="#9aa7b0"/><path d="M2 4L6 0V4Z" fill="#3c3f41"/><rect x="0" y="9" width="16" height="7" fill="#b99bf8"/><text x="8" y="15.3" font-size="6.5" font-weight="700" text-anchor="middle" fill="#3c3f41" font-family="Liberation Sans">PHP</text></svg><div class="t" style="top:362.49px;font-size:13px;line-height:18px;color:#bbbbbb;font-family:'Liberation Sans', sans-serif;letter-spacing:-0.450px;left:129px;">page-bookings.php</div><svg class="a" style="left:111px;top:383px;" width="16" height="16" viewBox="0 0 16 16"><path d="M6 0H14V9H2V4Z" fill="#9aa7b0"/><path d="M2 4L6 0V4Z" fill="#3c3f41"/><rect x="0" y="9" width="16" height="7" fill="#b99bf8"/><text x="8" y="15.3" font-size="6.5" font-weight="700" text-anchor="middle" fill="#3c3f41" font-family="Liberation Sans">PHP</text></svg><div class="t" style="top:382.49px;font-size:13px;line-height:18px;color:#bbbbbb;font-family:'Liberation Sans', sans-serif;letter-spacing:-0.450px;left:129px;">page-bookingsbackup.php</div><svg class="a" style="left:111px;top:403px;" width="16" height="16" viewBox="0 0 16 16"><path d="M6 0H14V9H2V4Z" fill="#9aa7b0"/><path d="M2 4L6 0V4Z" fill="#3c3f41"/><rect x="0" y="9" width="16" height="7" fill="#b99bf8"/><text x="8" y="15.3" font-size="6.5" font-weight="700" text-anchor="middle" fill="#3c3f41" font-family="Liberation Sans">PHP</text></svg><div class="t" style="top:402.49px;font-size:13px;line-height:18px;color:#bbbbbb;font-family:'Liberation Sans', sans-serif;letter-spacing:-0.450px;left:129px;">page-charts.php</div><svg class="a" style="left:111px;top:423px;" width="16" height="16" viewBox="0 0 16 16"><path d="M6 0H14V9H2V4Z" fill="#9aa7b0"/><path d="M2 4L6 0V4Z" fill="#3c3f41"/><rect x="0" y="9" width="16" height="7" fill="#b99bf8"/><text x="8" y="15.3" font-size="6.5" font-weight="700" text-anchor="middle" fill="#3c3f41" font-family="Liberation Sans">PHP</text></svg><div class="t" style="top:422.49px;font-size:13px;line-height:18px;color:#bbbbbb;font-family:'Liberation Sans', sans-serif;letter-spacing:-0.450px;left:129px;">page-files.php</div><svg class="a" style="left:111px;top:443px;" width="16" height="16" viewBox="0 0 16 16"><path d="M6 0H14V9H2V4Z" fill="#9aa7b0"/><path d="M2 4L6 0V4Z" fill="#3c3f41"/><rect x="0" y="9" width="16" height="7" fill="#b99bf8"/><text x="8" y="15.3" font-size="6.5" font-weight="700" text-anchor="middle" fill="#3c3f41" font-family="Liberation Sans">PHP</text></svg><div class="t" style="top:442.49px;font-size:13px;line-height:18px;color:#bbbbbb;font-family:'Liberation Sans', sans-serif;letter-spacing:-0.450px;left:129px;">page-logbook.php</div><svg class="a" style="left:111px;top:463px;" width="16" height="16" viewBox="0 0 16 16"><path d="M6 0H14V9H2V4Z" fill="#9aa7b0"/><path d="M2 4L6 0V4Z" fill="#3c3f41"/><rect x="0" y="9" width="16" height="7" fill="#b99bf8"/><text x="8" y="15.3" font-size="6.5" font-weight="700" text-anchor="middle" fill="#3c3f41" font-family="Liberation Sans">PHP</text></svg><div class="t" style="top:462.49px;font-size:13px;line-height:18px;color:#bbbbbb;font-family:'Liberation Sans', sans-serif;letter-spacing:-0.450px;left:129px;">page-logout.php</div><svg class="a" style="left:111px;top:483px;" width="16" height="16" viewBox="0 0 16 16"><path d="M6 0H14V9H2V4Z" fill="#9aa7b0"/><path d="M2 4L6 0V4Z" fill="#3c3f41"/><rect x="0" y="9" width="16" height="7" fill="#b99bf8"/><text x="8" y="15.3" font-size="6.5" font-weight="700" text-anchor="middle" fill="#3c3f41" font-family="Liberation Sans">PHP</text></svg><div class="t" style="top:482.49px;font-size:13px;line-height:18px;color:#bbbbbb;font-family:'Liberation Sans', sans-serif;letter-spacing:-0.450px;left:129px;">page-navdata.php</div><svg class="a" style="left:111px;top:503px;" width="16" height="16" viewBox="0 0 16 16"><path d="M6 0H14V9H2V4Z" fill="#9aa7b0"/><path d="M2 4L6 0V4Z" fill="#3c3f41"/><rect x="0" y="9" width="16" height="7" fill="#b99bf8"/><text x="8" y="15.3" font-size="6.5" font-weight="700" text-anchor="middle" fill="#3c3f41" font-family="Liberation Sans">PHP</text></svg><div class="t" style="top:502.49px;font-size:13px;line-height:18px;color:#bbbbbb;font-family:'Liberation Sans', sans-serif;letter-spacing:-0.450px;left:129px;">page-photos.php</div><svg class="a" style="left:111px;top:523px;" width="16" height="16" viewBox="0 0 16 16"><path d="M6 0H14V9H2V4Z" fill="#9aa7b0"/><path d="M2 4L6 0V4Z" fill="#3c3f41"/><rect x="0" y="9" width="16" height="7" fill="#b99bf8"/><text x="8" y="15.3" font-size="6.5" font-weight="700" text-anchor="middle" fill="#3c3f41" font-family="Liberation Sans">PHP</text></svg><div class="t" style="top:522.49px;font-size:13px;line-height:18px;color:#bbbbbb;font-family:'Liberation Sans', sans-serif;letter-spacing:-0.450px;left:129px;">page-profile.php</div><svg class="a" style="left:111px;top:543px;" width="16" height="16" viewBox="0 0 16 16"><path d="M6 0H14V9H2V4Z" fill="#9aa7b0"/><path d="M2 4L6 0V4Z" fill="#3c3f41"/><rect x="0" y="9" width="16" height="7" fill="#b99bf8"/><text x="8" y="15.3" font-size="6.5" font-weight="700" text-anchor="middle" fill="#3c3f41" font-family="Liberation Sans">PHP</text></svg><div class="t" style="top:542.49px;font-size:13px;line-height:18px;color:#bbbbbb;font-family:'Liberation Sans', sans-serif;letter-spacing:-0.450px;left:129px;">page-squawks.php</div><svg class="a" style="left:111px;top:563px;" width="16" height="16" viewBox="0 0 16 16"><path d="M6 0H14V9H2V4Z" fill="#9aa7b0"/><path d="M2 4L6 0V4Z" fill="#3c3f41"/><rect x="0" y="9" width="16" height="7" fill="#b99bf8"/><text x="8" y="15.3" font-size="6.5" font-weight="700" text-anchor="middle" fill="#3c3f41" font-family="Liberation Sans">PHP</text></svg><div class="t" style="top:562.49px;font-size:13px;line-height:18px;color:#bbbbbb;font-family:'Liberation Sans', sans-serif;letter-spacing:-0.450px;left:129px;">page-statistics.php</div><svg class="a" style="left:112px;top:583px;" width="14" height="16" viewBox="0 0 14 16"><path d="M4 0H13V16H1V3Z" fill="#9aa7b0"/><rect x="3" y="6" width="8" height="6" fill="#3c3f41"/><path d="M4 11l2-3 2 2 2-2v3z" fill="#62b543"/></svg><div class="t" style="top:582.49px;font-size:13px;line-height:18px;color:#bbbbbb;font-family:'Liberation Sans', sans-serif;letter-spacing:-0.450px;left:129px;">screenshot.png</div><svg class="a" style="left:111px;top:603px;" width="16" height="16" viewBox="0 0 16 16"><path d="M6 0H14V9H2V4Z" fill="#9aa7b0"/><path d="M2 4L6 0V4Z" fill="#3c3f41"/><rect x="0" y="9" width="16" height="7" fill="#b99bf8"/><text x="8" y="15.3" font-size="6.5" font-weight="700" text-anchor="middle" fill="#3c3f41" font-family="Liberation Sans">PHP</text></svg><div class="t" style="top:602.49px;font-size:13px;line-height:18px;color:#bbbbbb;font-family:'Liberation Sans', sans-serif;letter-spacing:-0.450px;left:129px;">single.php</div><svg class="a" style="left:111px;top:623px;" width="16" height="16" viewBox="0 0 16 16"><path d="M6 0H14V9H2V4Z" fill="#9aa7b0"/><path d="M2 4L6 0V4Z" fill="#3c3f41"/><rect x="0" y="9" width="16" height="7" fill="#40b6e0"/><text x="8" y="15.3" font-size="6" font-weight="700" text-anchor="middle" fill="#3c3f41" font-family="Liberation Sans">CSS</text></svg><div class="t" style="top:622.49px;font-size:13px;line-height:18px;color:#bbbbbb;font-family:'Liberation Sans', sans-serif;letter-spacing:-0.450px;left:129px;">style.css</div><svg class="a" style="left:93px;top:643px;" width="16" height="16" viewBox="0 0 16 16"><path d="M6 0H14V9H2V4Z" fill="#9aa7b0"/><path d="M2 4L6 0V4Z" fill="#3c3f41"/><rect x="0" y="9" width="16" height="7" fill="#b99bf8"/><text x="8" y="15.3" font-size="6.5" font-weight="700" text-anchor="middle" fill="#3c3f41" font-family="Liberation Sans">PHP</text></svg><div class="t" style="top:642.49px;font-size:13px;line-height:18px;color:#bbbbbb;font-family:'Liberation Sans', sans-serif;letter-spacing:-0.450px;left:111px;">index.php</div><svg class="a" style="left:75px;top:665px;" width="15" height="12" viewBox="0 0 15 12"><path d="M0 0H6L7.5 2H15V12H0Z" fill="#8c9aa3"/></svg><div class="t" style="top:662.49px;font-size:13px;line-height:18px;color:#bbbbbb;font-family:'Liberation Sans', sans-serif;letter-spacing:-0.450px;left:93px;">upgrade</div><svg class="a" style="left:57px;top:686px;" width="8" height="10" viewBox="0 0 8 10"><path d="M0 0L8 5 0 10Z" fill="#a0a0a0"/></svg><svg class="a" style="left:75px;top:685px;" width="15" height="12" viewBox="0 0 15 12"><path d="M0 0H6L7.5 2H15V12H0Z" fill="#8c9aa3"/></svg><div class="t" style="top:682.49px;font-size:13px;line-height:18px;color:#bbbbbb;font-family:'Liberation Sans', sans-serif;letter-spacing:-0.450px;left:93px;">uploads</div><svg class="a" style="left:75px;top:703px;" width="16" height="16" viewBox="0 0 16 16"><path d="M6 0H14V9H2V4Z" fill="#9aa7b0"/><path d="M2 4L6 0V4Z" fill="#3c3f41"/><rect x="0" y="9" width="16" height="7" fill="#b99bf8"/><text x="8" y="15.3" font-size="6.5" font-weight="700" text-anchor="middle" fill="#3c3f41" font-family="Liberation Sans">PHP</text></svg><div class="t" style="top:702.49px;font-size:13px;line-height:18px;color:#bbbbbb;font-family:'Liberation Sans', sans-serif;letter-spacing:-0.450px;left:93px;">index.php</div><svg class="a" style="left:39px;top:726px;" width="8" height="10" viewBox="0 0 8 10"><path d="M0 0L8 5 0 10Z" fill="#a0a0a0"/></svg><svg class="a" style="left:57px;top:725px;" width="15" height="12" viewBox="0 0 15 12"><path d="M0 0H6L7.5 2H15V12H0Z" fill="#8c9aa3"/></svg><div class="t" style="top:722.49px;font-size:13px;line-height:18px;color:#bbbbbb;font-family:'Liberation Sans', sans-serif;letter-spacing:-0.450px;left:75px;">wp-includes</div><svg class="a" style="left:57px;top:743px;" width="16" height="16" viewBox="0 0 16 16"><path d="M6 0H14V9H2V4Z" fill="#9aa7b0"/><path d="M2 4L6 0V4Z" fill="#3c3f41"/><rect x="0" y="9" width="16" height="7" fill="#b99bf8"/><text x="8" y="15.3" font-size="6.5" font-weight="700" text-anchor="middle" fill="#3c3f41" font-family="Liberation Sans">PHP</text></svg><div class="t" style="top:742.49px;font-size:13px;line-height:18px;color:#bbbbbb;font-family:'Liberation Sans', sans-serif;letter-spacing:-0.450px;left:75px;">index.php</div><svg class="a" style="left:58px;top:763px;" width="14" height="16" viewBox="0 0 14 16"><path d="M4 0H13V16H1V3Z" fill="#9aa7b0"/><path d="M3.5 6h7M3.5 9h7M3.5 12h7" stroke="#3c3f41" stroke-width="1.2"/></svg><div class="t" style="top:762.49px;font-size:13px;line-height:18px;color:#bbbbbb;font-family:'Liberation Sans', sans-serif;letter-spacing:-0.450px;left:75px;">license.txt</div><svg class="a" style="left:57px;top:783px;" width="16" height="16" viewBox="0 0 16 16"><path d="M6 0H14V9H2V4Z" fill="#9aa7b0"/><path d="M2 4L6 0V4Z" fill="#3c3f41"/><rect x="0" y="9" width="16" height="7" fill="#62b543"/><text x="5" y="15.3" font-size="6.5" font-weight="700" text-anchor="middle" fill="#3c3f41" font-family="Liberation Sans">H</text></svg><div class="t" style="top:782.49px;font-size:13px;line-height:18px;color:#bbbbbb;font-family:'Liberation Sans', sans-serif;letter-spacing:-0.450px;left:75px;">readme.html</div><svg class="a" style="left:57px;top:803px;" width="16" height="16" viewBox="0 0 16 16"><path d="M6 0H14V9H2V4Z" fill="#9aa7b0"/><path d="M2 4L6 0V4Z" fill="#3c3f41"/><rect x="0" y="9" width="16" height="7" fill="#b99bf8"/><text x="8" y="15.3" font-size="6.5" font-weight="700" text-anchor="middle" fill="#3c3f41" font-family="Liberation Sans">PHP</text></svg><div class="t" style="top:802.49px;font-size:13px;line-height:18px;color:#bbbbbb;font-family:'Liberation Sans', sans-serif;letter-spacing:-0.450px;left:75px;">wp-activate.php</div><svg class="a" style="left:57px;top:823px;" width="16" height="16" viewBox="0 0 16 16"><path d="M6 0H14V9H2V4Z" fill="#9aa7b0"/><path d="M2 4L6 0V4Z" fill="#3c3f41"/><rect x="0" y="9" width="16" height="7" fill="#b99bf8"/><text x="8" y="15.3" font-size="6.5" font-weight="700" text-anchor="middle" fill="#3c3f41" font-family="Liberation Sans">PHP</text></svg><div class="t" style="top:822.49px;font-size:13px;line-height:18px;color:#bbbbbb;font-family:'Liberation Sans', sans-serif;letter-spacing:-0.450px;left:75px;">wp-blog-header.php</div><svg class="a" style="left:57px;top:843px;" width="16" height="16" viewBox="0 0 16 16"><path d="M6 0H14V9H2V4Z" fill="#9aa7b0"/><path d="M2 4L6 0V4Z" fill="#3c3f41"/><rect x="0" y="9" width="16" height="7" fill="#b99bf8"/><text x="8" y="15.3" font-size="6.5" font-weight="700" text-anchor="middle" fill="#3c3f41" font-family="Liberation Sans">PHP</text></svg><div class="t" style="top:842.49px;font-size:13px;line-height:18px;color:#bbbbbb;font-family:'Liberation Sans', sans-serif;letter-spacing:-0.450px;left:75px;">wp-comments-post.php</div><svg class="a" style="left:57px;top:863px;" width="16" height="16" viewBox="0 0 16 16"><path d="M6 0H14V9H2V4Z" fill="#9aa7b0"/><path d="M2 4L6 0V4Z" fill="#3c3f41"/><rect x="0" y="9" width="16" height="7" fill="#b99bf8"/><text x="8" y="15.3" font-size="6.5" font-weight="700" text-anchor="middle" fill="#3c3f41" font-family="Liberation Sans">PHP</text></svg><div class="t" style="top:862.49px;font-size:13px;line-height:18px;color:#bbbbbb;font-family:'Liberation Sans', sans-serif;letter-spacing:-0.450px;left:75px;">wp-config.php</div><svg class="a" style="left:57px;top:883px;" width="16" height="16" viewBox="0 0 16 16"><path d="M6 0H14V9H2V4Z" fill="#9aa7b0"/><path d="M2 4L6 0V4Z" fill="#3c3f41"/><rect x="0" y="9" width="16" height="7" fill="#b99bf8"/><text x="8" y="15.3" font-size="6.5" font-weight="700" text-anchor="middle" fill="#3c3f41" font-family="Liberation Sans">PHP</text></svg><div class="t" style="top:882.49px;font-size:13px;line-height:18px;color:#bbbbbb;font-family:'Liberation Sans', sans-serif;letter-spacing:-0.450px;left:75px;">wp-config-sample.php</div><svg class="a" style="left:57px;top:903px;" width="16" height="16" viewBox="0 0 16 16"><path d="M6 0H14V9H2V4Z" fill="#9aa7b0"/><path d="M2 4L6 0V4Z" fill="#3c3f41"/><rect x="0" y="9" width="16" height="7" fill="#b99bf8"/><text x="8" y="15.3" font-size="6.5" font-weight="700" text-anchor="middle" fill="#3c3f41" font-family="Liberation Sans">PHP</text></svg><div class="t" style="top:902.49px;font-size:13px;line-height:18px;color:#bbbbbb;font-family:'Liberation Sans', sans-serif;letter-spacing:-0.450px;left:75px;">wp-cron.php</div></div><div class="a" style="left:1603px;top:405px;width:9px;height:428px;background:#57595b;"></div><div class="a" style="left:1316px;top:987px;width:212px;height:7px;background:rgba(95,98,100,0.75);"></div><div class="a" style="left:1613px;top:58px;width:1px;height:939px;background:#2b2b2b;"></div><div class="a" style="left:1614px;top:58px;width:923px;height:26px;background:#3c3f41;"></div><div class="a" style="left:1614px;top:58px;width:155px;height:27px;background:#4e5254;"></div><div class="a" style="left:1614px;top:82px;width:155px;height:3px;background:#7f858a;"></div><svg class="a" style="left:1623px;top:63px;" width="16" height="16" viewBox="0 0 16 16"><path d="M6 0H14V9H2V4Z" fill="#9aa7b0"/><path d="M2 4L6 0V4Z" fill="#3c3f41"/><rect x="0" y="9" width="16" height="7" fill="#b99bf8"/><text x="8" y="15.3" font-size="6.5" font-weight="700" text-anchor="middle" fill="#3c3f41" font-family="Liberation Sans">PHP</text></svg><div class="t" style="top:63.49px;font-size:13px;line-height:18px;color:#bbbbbb;font-family:'Liberation Sans', sans-serif;letter-spacing:-0.400px;left:1642.5px;">page-bookings.php</div><svg class="a" style="left:1753px;top:66px;" width="9" height="9" viewBox="0 0 9 9"><path d="M1 1L8 8M8 1L1 8" stroke="#7a7a7a" stroke-width="1.1"/></svg><svg class="a" style="left:1776px;top:63px;" width="16" height="16" viewBox="0 0 16 16"><path d="M6 0H14V9H2V4Z" fill="#9aa7b0"/><path d="M2 4L6 0V4Z" fill="#3c3f41"/><rect x="0" y="9" width="16" height="7" fill="#b99bf8"/><text x="8" y="15.3" font-size="6.5" font-weight="700" text-anchor="middle" fill="#3c3f41" font-family="Liberation Sans">PHP</text></svg><div class="t" style="top:63.49px;font-size:13px;line-height:18px;color:#bbbbbb;font-family:'Liberation Sans', sans-serif;letter-spacing:-0.400px;left:1795.5px;">page-admin.php</div><svg class="a" style="left:1891px;top:66px;" width="9" height="9" viewBox="0 0 9 9"><path d="M1 1L8 8M8 1L1 8" stroke="#7a7a7a" stroke-width="1.1"/></svg><svg class="a" style="left:1917px;top:63px;" width="16" height="16" viewBox="0 0 16 16"><path d="M6 0H14V9H2V4Z" fill="#9aa7b0"/><path d="M2 4L6 0V4Z" fill="#3c3f41"/><rect x="0" y="9" width="16" height="7" fill="#b99bf8"/><text x="8" y="15.3" font-size="6.5" font-weight="700" text-anchor="middle" fill="#3c3f41" font-family="Liberation Sans">PHP</text></svg><div class="t" style="top:63.49px;font-size:13px;line-height:18px;color:#bbbbbb;font-family:'Liberation Sans', sans-serif;letter-spacing:-0.400px;left:1936.5px;">functions.php</div><svg class="a" style="left:2016px;top:66px;" width="9" height="9" viewBox="0 0 9 9"><path d="M1 1L8 8M8 1L1 8" stroke="#7a7a7a" stroke-width="1.1"/></svg><div class="a" style="left:1614px;top:85px;width:923px;height:890px;background:#2b2b2b;"></div><div class="a" style="left:1614px;top:85px;width:78px;height:890px;background:#313335;"></div><div class="a" style="left:1691px;top:85px;width:1px;height:880px;background:#555555;"></div><div class="a" style="left:1692px;top:659px;width:845px;height:20px;background:#323232;"></div><div class="a" style="left:1614px;top:85px;width:907px;height:889px;overflow:hidden"><div class="a" style="left:113px;top:0px;width:1px;height:372px;background:#393939;"></div><div class="a" style="left:113px;top:413px;width:1px;height:477px;background:#393939;"></div><div class="a" style="left:141px;top:0px;width:1px;height:352px;background:#393939;"></div><div class="a" style="left:169px;top:0px;width:1px;height:293px;background:#393939;"></div><div class="a" style="left:197px;top:0px;width:1px;height:55px;background:#393939;"></div><div class="a" style="left:197px;top:213px;width:1px;height:59px;background:#393939;"></div><div class="a" style="left:141px;top:473px;width:1px;height:417px;background:#393939;"></div><div class="a" style="left:169px;top:633px;width:1px;height:227px;background:#393939;"></div><div class="a" style="left:169px;top:873px;width:1px;height:17px;background:#393939;"></div><div class="a" style="left:197px;top:713px;width:1px;height:79px;background:#393939;"></div><div class="t" style="top:-1.93px;font-size:11px;line-height:15px;color:#606366;font-family:'Liberation Mono', monospace;right:2534px;text-align:right;right:auto;width:40px;left:-15px">256</div><div class="t" style="top:-2.61px;font-size:11.67px;line-height:16px;color:#a9b7c6;font-family:'Liberation Mono', monospace;left:223.5px;white-space:pre;"><span style="color:#cc7832;text-decoration:underline wavy #7e7a3a;text-decoration-thickness:1px;text-underline-offset:2px">var</span> year = eventObj.<span style="color:#9876aa">start</span>.<span style="color:#ffc66d">getFullYear</span>()<span style="color:#cc7832">;</span></div><div class="t" style="top:18.07px;font-size:11px;line-height:15px;color:#606366;font-family:'Liberation Mono', monospace;right:2534px;text-align:right;right:auto;width:40px;left:-15px">257</div><div class="t" style="top:38.07px;font-size:11px;line-height:15px;color:#606366;font-family:'Liberation Mono', monospace;right:2534px;text-align:right;right:auto;width:40px;left:-15px">258</div><div class="t" style="top:37.39px;font-size:11.67px;line-height:16px;color:#a9b7c6;font-family:'Liberation Mono', monospace;left:223.5px;white-space:pre;"><span style="color:#ffc66d">alert</span>(<span style="color:#6a8759">'Datum </span><span style="color:#6a8759;text-decoration:underline wavy #5c7a3c;text-decoration-thickness:1px;text-underline-offset:2px">geboekt</span><span style="color:#6a8759"> </span><span style="color:#6a8759;text-decoration:underline wavy #5c7a3c;text-decoration-thickness:1px;text-underline-offset:2px">voor</span><span style="color:#6a8759">: '</span> + eventObj.<span style="color:#9876aa">title</span> + <span style="color:#6a8759">'</span><span style="color:#cc7832">\n</span><span style="color:#6a8759"> Dag: '</span> + day + <span style="color:#6a8759">'/'</span> + month + <span style="color:#6a8759">'/'</span> + year)<span style="color:#cc7832">;</span></div><div class="t" style="top:58.07px;font-size:11px;line-height:15px;color:#606366;font-family:'Liberation Mono', monospace;right:2534px;text-align:right;right:auto;width:40px;left:-15px">259</div><div class="t" style="top:57.39px;font-size:11.67px;line-height:16px;color:#a9b7c6;font-family:'Liberation Mono', monospace;left:195.5px;white-space:pre;">}<span style="color:#cc7832">,</span></div><div class="t" style="top:78.07px;font-size:11px;line-height:15px;color:#606366;font-family:'Liberation Mono', monospace;right:2534px;text-align:right;right:auto;width:40px;left:-15px">260</div><div class="t" style="top:77.39px;font-size:11.67px;line-height:16px;color:#a9b7c6;font-family:'Liberation Mono', monospace;left:195.5px;white-space:pre;"><span style="color:#9876aa">defaultView</span>: <span style="color:#6a8759">'dayGridMonth'</span><span style="color:#cc7832">,</span></div><div class="t" style="top:98.07px;font-size:11px;line-height:15px;color:#606366;font-family:'Liberation Mono', monospace;right:2534px;text-align:right;right:auto;width:40px;left:-15px">261</div><div class="t" style="top:97.39px;font-size:11.67px;line-height:16px;color:#a9b7c6;font-family:'Liberation Mono', monospace;left:195.5px;white-space:pre;"><span style="color:#9876aa">schedulerLicenseKey</span>: <span style="color:#6a8759">'0088131402-fcs-1573126272'</span><span style="color:#cc7832">,</span></div><div class="t" style="top:118.07px;font-size:11px;line-height:15px;color:#606366;font-family:'Liberation Mono', monospace;right:2534px;text-align:right;right:auto;width:40px;left:-15px">262</div><div class="t" style="top:117.39px;font-size:11.67px;line-height:16px;color:#a9b7c6;font-family:'Liberation Mono', monospace;left:195.5px;white-space:pre;"><span style="color:#9876aa">firstDay</span>: <span style="color:#6897bb">1</span><span style="color:#cc7832">,</span></div><div class="t" style="top:138.07px;font-size:11px;line-height:15px;color:#606366;font-family:'Liberation Mono', monospace;right:2534px;text-align:right;right:auto;width:40px;left:-15px">263</div><div class="t" style="top:137.39px;font-size:11.67px;line-height:16px;color:#a9b7c6;font-family:'Liberation Mono', monospace;left:195.5px;white-space:pre;"><span style="color:#9876aa">fixedWeekCount</span>: <span style="color:#cc7832">false,</span></div><div class="t" style="top:158.07px;font-size:11px;line-height:15px;color:#606366;font-family:'Liberation Mono', monospace;right:2534px;text-align:right;right:auto;width:40px;left:-15px">264</div><div class="t" style="top:157.39px;font-size:11.67px;line-height:16px;color:#a9b7c6;font-family:'Liberation Mono', monospace;left:195.5px;white-space:pre;"><span style="color:#9876aa">eventTextColor</span>: <span style="color:#6a8759">'</span><span style="color:#6897bb;background:#344134">#2e3236</span><span style="color:#6a8759">'</span><span style="color:#cc7832">,</span></div><div class="t" style="top:178.07px;font-size:11px;line-height:15px;color:#606366;font-family:'Liberation Mono', monospace;right:2534px;text-align:right;right:auto;width:40px;left:-15px">265</div><div class="t" style="top:177.39px;font-size:11.67px;line-height:16px;color:#a9b7c6;font-family:'Liberation Mono', monospace;left:195.5px;white-space:pre;"><span style="color:#9876aa">events</span>: newArr<span style="color:#cc7832">,</span></div><div class="t" style="top:198.07px;font-size:11px;line-height:15px;color:#606366;font-family:'Liberation Mono', monospace;right:2534px;text-align:right;right:auto;width:40px;left:-15px">266</div><div class="t" style="top:197.39px;font-size:11.67px;line-height:16px;color:#a9b7c6;font-family:'Liberation Mono', monospace;left:195.5px;white-space:pre;"><span style="color:#9876aa">eventTimeFormat</span>: {</div><div class="t" style="top:218.07px;font-size:11px;line-height:15px;color:#606366;font-family:'Liberation Mono', monospace;right:2534px;text-align:right;right:auto;width:40px;left:-15px">267</div><div class="t" style="top:217.39px;font-size:11.67px;line-height:16px;color:#a9b7c6;font-family:'Liberation Mono', monospace;left:223.5px;white-space:pre;"><span style="color:#9876aa">hour</span>: <span style="color:#6a8759">'2-digit'</span><span style="color:#cc7832">,</span></div><div class="t" style="top:238.07px;font-size:11px;line-height:15px;color:#606366;font-family:'Liberation Mono', monospace;right:2534px;text-align:right;right:auto;width:40px;left:-15px">268</div><div class="t" style="top:237.39px;font-size:11.67px;line-height:16px;color:#a9b7c6;font-family:'Liberation Mono', monospace;left:223.5px;white-space:pre;"><span style="color:#9876aa">minute</span>: <span style="color:#6a8759">'2-digit'</span><span style="color:#cc7832">,</span></div><div class="t" style="top:258.07px;font-size:11px;line-height:15px;color:#606366;font-family:'Liberation Mono', monospace;right:2534px;text-align:right;right:auto;width:40px;left:-15px">269</div><div class="t" style="top:257.39px;font-size:11.67px;line-height:16px;color:#a9b7c6;font-family:'Liberation Mono', monospace;left:223.5px;white-space:pre;"><span style="color:#9876aa">hour12</span>: <span style="color:#cc7832">false,</span></div><div class="t" style="top:278.07px;font-size:11px;line-height:15px;color:#606366;font-family:'Liberation Mono', monospace;right:2534px;text-align:right;right:auto;width:40px;left:-15px">270</div><div class="t" style="top:277.39px;font-size:11.67px;line-height:16px;color:#a9b7c6;font-family:'Liberation Mono', monospace;left:195.5px;white-space:pre;">}</div><div class="t" style="top:298.07px;font-size:11px;line-height:15px;color:#606366;font-family:'Liberation Mono', monospace;right:2534px;text-align:right;right:auto;width:40px;left:-15px">271</div><div class="t" style="top:297.39px;font-size:11.67px;line-height:16px;color:#a9b7c6;font-family:'Liberation Mono', monospace;left:167.5px;white-space:pre;">})<span style="color:#cc7832">;</span></div><div class="t" style="top:318.07px;font-size:11px;line-height:15px;color:#606366;font-family:'Liberation Mono', monospace;right:2534px;text-align:right;right:auto;width:40px;left:-15px">272</div><div class="t" style="top:338.07px;font-size:11px;line-height:15px;color:#606366;font-family:'Liberation Mono', monospace;right:2534px;text-align:right;right:auto;width:40px;left:-15px">273</div><div class="t" style="top:337.39px;font-size:11.67px;line-height:16px;color:#a9b7c6;font-family:'Liberation Mono', monospace;left:167.5px;white-space:pre;">calendar.<span style="color:#ffc66d">render</span>()<span style="color:#cc7832">;</span></div><div class="t" style="top:358.07px;font-size:11px;line-height:15px;color:#606366;font-family:'Liberation Mono', monospace;right:2534px;text-align:right;right:auto;width:40px;left:-15px">274</div><div class="t" style="top:357.39px;font-size:11.67px;line-height:16px;color:#a9b7c6;font-family:'Liberation Mono', monospace;left:139.5px;white-space:pre;">})<span style="color:#cc7832">;</span></div><div class="t" style="top:378.07px;font-size:11px;line-height:15px;color:#606366;font-family:'Liberation Mono', monospace;right:2534px;text-align:right;right:auto;width:40px;left:-15px">275</div><div class="t" style="top:377.39px;font-size:11.67px;line-height:16px;color:#a9b7c6;font-family:'Liberation Mono', monospace;left:111.5px;white-space:pre;"><span style="color:#e8bf6a">&lt;/script&gt;</span></div><div class="t" style="top:398.07px;font-size:11px;line-height:15px;color:#606366;font-family:'Liberation Mono', monospace;right:2534px;text-align:right;right:auto;width:40px;left:-15px">276</div><div class="t" style="top:397.39px;font-size:11.67px;line-height:16px;color:#a9b7c6;font-family:'Liberation Mono', monospace;left:111.5px;white-space:pre;"><span style="color:#e8bf6a">&lt;script&gt;</span></div><div class="t" style="top:418.07px;font-size:11px;line-height:15px;color:#606366;font-family:'Liberation Mono', monospace;right:2534px;text-align:right;right:auto;width:40px;left:-15px">277</div><div class="t" style="top:417.39px;font-size:11.67px;line-height:16px;color:#a9b7c6;font-family:'Liberation Mono', monospace;left:139.5px;white-space:pre;"><span style="color:#808080">//Add added booking to </span><span style="color:#808080;text-decoration:underline wavy #5c7a3c;text-decoration-thickness:1px;text-underline-offset:2px">databas</span></div><div class="t" style="top:438.07px;font-size:11px;line-height:15px;color:#606366;font-family:'Liberation Mono', monospace;right:2534px;text-align:right;right:auto;width:40px;left:-15px">278</div><div class="t" style="top:458.07px;font-size:11px;line-height:15px;color:#606366;font-family:'Liberation Mono', monospace;right:2534px;text-align:right;right:auto;width:40px;left:-15px">279</div><div class="t" style="top:457.39px;font-size:11.67px;line-height:16px;color:#a9b7c6;font-family:'Liberation Mono', monospace;left:139.5px;white-space:pre;"><span style="color:#cc7832">function </span><span style="color:#ffc66d">add_booking_to_database</span>() {</div><div class="t" style="top:478.07px;font-size:11px;line-height:15px;color:#606366;font-family:'Liberation Mono', monospace;right:2534px;text-align:right;right:auto;width:40px;left:-15px">280</div><div class="t" style="top:498.07px;font-size:11px;line-height:15px;color:#606366;font-family:'Liberation Mono', monospace;right:2534px;text-align:right;right:auto;width:40px;left:-15px">281</div><div class="t" style="top:497.39px;font-size:11.67px;line-height:16px;color:#a9b7c6;font-family:'Liberation Mono', monospace;left:167.5px;white-space:pre;"><span style="color:#cc7832;text-decoration:underline wavy #7e7a3a;text-decoration-thickness:1px;text-underline-offset:2px">var</span> title = <span style="color:#9876aa;font-style:italic">$</span>(<span style="color:#6a8759">'</span><span style="color:#6a8759;background:#32402f">#reason</span><span style="color:#6a8759">'</span>).<span style="color:#ffc66d">attr</span>(<span style="color:#6a8759">"name"</span>)<span style="color:#cc7832">;</span></div><div class="t" style="top:518.07px;font-size:11px;line-height:15px;color:#606366;font-family:'Liberation Mono', monospace;right:2534px;text-align:right;right:auto;width:40px;left:-15px">282</div><div class="t" style="top:517.39px;font-size:11.67px;line-height:16px;color:#a9b7c6;font-family:'Liberation Mono', monospace;left:167.5px;white-space:pre;"><span style="color:#cc7832;text-decoration:underline wavy #7e7a3a;text-decoration-thickness:1px;text-underline-offset:2px">var</span> start = <span style="color:#9876aa;font-style:italic">$</span>(<span style="color:#6a8759">'</span><span style="color:#6a8759;background:#32402f">#start_time</span><span style="color:#6a8759">'</span>).<span style="color:#ffc66d">attr</span>(<span style="color:#6a8759">"name"</span>)<span style="color:#cc7832">;</span></div><div class="t" style="top:538.07px;font-size:11px;line-height:15px;color:#606366;font-family:'Liberation Mono', monospace;right:2534px;text-align:right;right:auto;width:40px;left:-15px">283</div><div class="t" style="top:537.39px;font-size:11.67px;line-height:16px;color:#a9b7c6;font-family:'Liberation Mono', monospace;left:167.5px;white-space:pre;"><span style="color:#cc7832;text-decoration:underline wavy #7e7a3a;text-decoration-thickness:1px;text-underline-offset:2px">var</span> end   = <span style="color:#9876aa;font-style:italic">$</span>(<span style="color:#6a8759">'</span><span style="color:#6a8759;background:#32402f">#end_time</span><span style="color:#6a8759">'</span>).<span style="color:#ffc66d">attr</span>(<span style="color:#6a8759">"name"</span>)<span style="color:#cc7832">;</span></div><div class="t" style="top:558.07px;font-size:11px;line-height:15px;color:#606366;font-family:'Liberation Mono', monospace;right:2534px;text-align:right;right:auto;width:40px;left:-15px">284</div><div class="t" style="top:578.07px;font-size:11px;line-height:15px;color:#a4a3a3;font-family:'Liberation Mono', monospace;right:2534px;text-align:right;right:auto;width:40px;left:-15px">285</div><div class="t" style="top:577.39px;font-size:11.67px;line-height:16px;color:#a9b7c6;font-family:'Liberation Mono', monospace;left:167.5px;white-space:pre;"><span style="color:#808080">//alert(title + '\n' + start + '\n' + end);</span></div><div class="t" style="top:598.07px;font-size:11px;line-height:15px;color:#606366;font-family:'Liberation Mono', monospace;right:2534px;text-align:right;right:auto;width:40px;left:-15px">286</div><div class="t" style="top:618.07px;font-size:11px;line-height:15px;color:#606366;font-family:'Liberation Mono', monospace;right:2534px;text-align:right;right:auto;width:40px;left:-15px">287</div><div class="t" style="top:617.39px;font-size:11.67px;line-height:16px;color:#a9b7c6;font-family:'Liberation Mono', monospace;left:167.5px;white-space:pre;"><span style="color:#9876aa;font-style:italic">$</span>.<span style="color:#ffc66d">ajax</span>({</div><div class="t" style="top:638.07px;font-size:11px;line-height:15px;color:#606366;font-family:'Liberation Mono', monospace;right:2534px;text-align:right;right:auto;width:40px;left:-15px">288</div><div class="t" style="top:637.39px;font-size:11.67px;line-height:16px;color:#a9b7c6;font-family:'Liberation Mono', monospace;left:195.5px;white-space:pre;"><span style="color:#9876aa">action</span>: <span style="color:#6a8759">'add_booking_to_database'</span><span style="color:#cc7832">,</span></div><div class="t" style="top:658.07px;font-size:11px;line-height:15px;color:#606366;font-family:'Liberation Mono', monospace;right:2534px;text-align:right;right:auto;width:40px;left:-15px">289</div><div class="t" style="top:657.39px;font-size:11.67px;line-height:16px;color:#a9b7c6;font-family:'Liberation Mono', monospace;left:195.5px;white-space:pre;"><span style="color:#9876aa">type</span>: <span style="color:#6a8759">'POST'</span><span style="color:#cc7832">,</span></div><div class="t" style="top:678.07px;font-size:11px;line-height:15px;color:#606366;font-family:'Liberation Mono', monospace;right:2534px;text-align:right;right:auto;width:40px;left:-15px">290</div><div class="t" style="top:677.39px;font-size:11.67px;line-height:16px;color:#a9b7c6;font-family:'Liberation Mono', monospace;left:195.5px;white-space:pre;"><span style="color:#9876aa">url</span>: <span style="color:#6a8759">"</span><span style="color:#cc7832;background:#232525">&lt;?php echo </span><span style="color:#a9b7c6;background:#232525">admin_url( </span><span style="color:#6a8759;background:#232525">'admin-ajax.php'</span><span style="color:#a9b7c6;background:#232525"> )</span><span style="color:#cc7832;background:#232525">; ?&gt;</span><span style="color:#6a8759">"</span><span style="color:#cc7832">,</span></div><div class="t" style="top:698.07px;font-size:11px;line-height:15px;color:#606366;font-family:'Liberation Mono', monospace;right:2534px;text-align:right;right:auto;width:40px;left:-15px">291</div><div class="t" style="top:697.39px;font-size:11.67px;line-height:16px;color:#a9b7c6;font-family:'Liberation Mono', monospace;left:195.5px;white-space:pre;"><span style="color:#9876aa">data</span>: {</div><div class="t" style="top:718.07px;font-size:11px;line-height:15px;color:#606366;font-family:'Liberation Mono', monospace;right:2534px;text-align:right;right:auto;width:40px;left:-15px">292</div><div class="t" style="top:717.39px;font-size:11.67px;line-height:16px;color:#a9b7c6;font-family:'Liberation Mono', monospace;left:223.5px;white-space:pre;"><span style="color:#9876aa">action</span>: <span style="color:#6a8759">'add_booking_to_database'</span><span style="color:#cc7832">,</span></div><div class="t" style="top:738.07px;font-size:11px;line-height:15px;color:#606366;font-family:'Liberation Mono', monospace;right:2534px;text-align:right;right:auto;width:40px;left:-15px">293</div><div class="t" style="top:737.39px;font-size:11.67px;line-height:16px;color:#a9b7c6;font-family:'Liberation Mono', monospace;left:223.5px;white-space:pre;"><span style="color:#9876aa">title</span>: title<span style="color:#cc7832">,</span></div><div class="t" style="top:758.07px;font-size:11px;line-height:15px;color:#606366;font-family:'Liberation Mono', monospace;right:2534px;text-align:right;right:auto;width:40px;left:-15px">294</div><div class="t" style="top:757.39px;font-size:11.67px;line-height:16px;color:#a9b7c6;font-family:'Liberation Mono', monospace;left:223.5px;white-space:pre;"><span style="color:#9876aa">start</span>: start<span style="color:#cc7832">,</span></div><div class="t" style="top:778.07px;font-size:11px;line-height:15px;color:#606366;font-family:'Liberation Mono', monospace;right:2534px;text-align:right;right:auto;width:40px;left:-15px">295</div><div class="t" style="top:777.39px;font-size:11.67px;line-height:16px;color:#a9b7c6;font-family:'Liberation Mono', monospace;left:223.5px;white-space:pre;"><span style="color:#9876aa">end</span>: end</div><div class="t" style="top:798.07px;font-size:11px;line-height:15px;color:#606366;font-family:'Liberation Mono', monospace;right:2534px;text-align:right;right:auto;width:40px;left:-15px">296</div><div class="t" style="top:797.39px;font-size:11.67px;line-height:16px;color:#a9b7c6;font-family:'Liberation Mono', monospace;left:195.5px;white-space:pre;">}<span style="color:#cc7832">,</span></div><div class="t" style="top:818.07px;font-size:11px;line-height:15px;color:#606366;font-family:'Liberation Mono', monospace;right:2534px;text-align:right;right:auto;width:40px;left:-15px">297</div><div class="t" style="top:817.39px;font-size:11.67px;line-height:16px;color:#a9b7c6;font-family:'Liberation Mono', monospace;left:195.5px;white-space:pre;"><span style="color:#9876aa">dataType</span>: <span style="color:#6a8759">'json'</span><span style="color:#cc7832">,</span></div><div class="t" style="top:838.07px;font-size:11px;line-height:15px;color:#606366;font-family:'Liberation Mono', monospace;right:2534px;text-align:right;right:auto;width:40px;left:-15px">298</div><div class="t" style="top:837.39px;font-size:11.67px;line-height:16px;color:#a9b7c6;font-family:'Liberation Mono', monospace;left:195.5px;white-space:pre;"><span style="color:#9876aa">encode</span>: <span style="color:#cc7832">true</span></div><div class="t" style="top:858.07px;font-size:11px;line-height:15px;color:#606366;font-family:'Liberation Mono', monospace;right:2534px;text-align:right;right:auto;width:40px;left:-15px">299</div><div class="t" style="top:857.39px;font-size:11.67px;line-height:16px;color:#a9b7c6;font-family:'Liberation Mono', monospace;left:167.5px;white-space:pre;">})</div><div class="t" style="top:878.07px;font-size:11px;line-height:15px;color:#606366;font-family:'Liberation Mono', monospace;right:2534px;text-align:right;right:auto;width:40px;left:-15px">300</div><div class="t" style="top:877.39px;font-size:11.67px;line-height:16px;color:#a9b7c6;font-family:'Liberation Mono', monospace;left:195.5px;white-space:pre;">.<span style="color:#ffc66d">done</span>(<span style="color:#cc7832">function </span>(data) {</div><svg class="a" style="left:73px;top:59px;" width="9" height="12" viewBox="0 0 9 12"><path d="M0.5 11.5H8.5V4.5L4.5 0.5 0.5 4.5Z" fill="#313335" stroke="#6a6a6a"/><path d="M2.5 7h4" stroke="#8a8a8a"/></svg><svg class="a" style="left:73px;top:199px;" width="9" height="12" viewBox="0 0 9 12"><path d="M0.5 0.5H8.5V7.5L4.5 11.5 0.5 7.5Z" fill="#313335" stroke="#6a6a6a"/><path d="M2.5 5h4" stroke="#8a8a8a"/></svg><svg class="a" style="left:73px;top:279px;" width="9" height="12" viewBox="0 0 9 12"><path d="M0.5 11.5H8.5V4.5L4.5 0.5 0.5 4.5Z" fill="#313335" stroke="#6a6a6a"/><path d="M2.5 7h4" stroke="#8a8a8a"/></svg><svg class="a" style="left:73px;top:299px;" width="9" height="12" viewBox="0 0 9 12"><path d="M0.5 11.5H8.5V4.5L4.5 0.5 0.5 4.5Z" fill="#313335" stroke="#6a6a6a"/><path d="M2.5 7h4" stroke="#8a8a8a"/></svg><svg class="a" style="left:73px;top:359px;" width="9" height="12" viewBox="0 0 9 12"><path d="M0.5 11.5H8.5V4.5L4.5 0.5 0.5 4.5Z" fill="#313335" stroke="#6a6a6a"/><path d="M2.5 7h4" stroke="#8a8a8a"/></svg><svg class="a" style="left:73px;top:379px;" width="9" height="12" viewBox="0 0 9 12"><path d="M0.5 11.5H8.5V4.5L4.5 0.5 0.5 4.5Z" fill="#313335" stroke="#6a6a6a"/><path d="M2.5 7h4" stroke="#8a8a8a"/></svg><svg class="a" style="left:73px;top:399px;" width="9" height="12" viewBox="0 0 9 12"><path d="M0.5 0.5H8.5V7.5L4.5 11.5 0.5 7.5Z" fill="#313335" stroke="#6a6a6a"/><path d="M2.5 5h4" stroke="#8a8a8a"/></svg><svg class="a" style="left:73px;top:459px;" width="9" height="12" viewBox="0 0 9 12"><path d="M0.5 0.5H8.5V7.5L4.5 11.5 0.5 7.5Z" fill="#313335" stroke="#6a6a6a"/><path d="M2.5 5h4" stroke="#8a8a8a"/></svg><svg class="a" style="left:73px;top:619px;" width="9" height="12" viewBox="0 0 9 12"><path d="M0.5 0.5H8.5V7.5L4.5 11.5 0.5 7.5Z" fill="#313335" stroke="#6a6a6a"/><path d="M2.5 5h4" stroke="#8a8a8a"/></svg><svg class="a" style="left:73px;top:699px;" width="9" height="12" viewBox="0 0 9 12"><path d="M0.5 0.5H8.5V7.5L4.5 11.5 0.5 7.5Z" fill="#313335" stroke="#6a6a6a"/><path d="M2.5 5h4" stroke="#8a8a8a"/></svg><svg class="a" style="left:73px;top:799px;" width="9" height="12" viewBox="0 0 9 12"><path d="M0.5 11.5H8.5V4.5L4.5 0.5 0.5 4.5Z" fill="#313335" stroke="#6a6a6a"/><path d="M2.5 7h4" stroke="#8a8a8a"/></svg><svg class="a" style="left:73px;top:859px;" width="9" height="12" viewBox="0 0 9 12"><path d="M0.5 11.5H8.5V4.5L4.5 0.5 0.5 4.5Z" fill="#313335" stroke="#6a6a6a"/><path d="M2.5 7h4" stroke="#8a8a8a"/></svg><svg class="a" style="left:73px;top:879px;" width="9" height="12" viewBox="0 0 9 12"><path d="M0.5 0.5H8.5V7.5L4.5 11.5 0.5 7.5Z" fill="#313335" stroke="#6a6a6a"/><path d="M2.5 5h4" stroke="#8a8a8a"/></svg><svg class="a" style="left:43px;top:160px;" width="10" height="10" viewBox="0 0 10 10"><rect x="0.5" y="0.5" width="9" height="9" fill="#2e3236" stroke="#404040"/></svg><svg class="a" style="left:90px;top:573px;" width="14" height="18" viewBox="0 0 14 18"><circle cx="7" cy="6" r="5.5" fill="#f0a732"/><path d="M4 10h6v2H4z" fill="#f0a732"/><path d="M4.5 13.5h5M5 15.5h4" stroke="#cfcfcf" stroke-width="1.2"/></svg></div><div class="a" style="left:2521px;top:85px;width:16px;height:890px;background:#2b2b2b;"></div><div class="a" style="left:2521px;top:659px;width:16px;height:20px;background:#323232;"></div><div class="a" style="left:2525px;top:87px;width:10px;height:10px;background:#c7962c;"></div><div class="a" style="left:2523px;top:126px;width:14px;height:2px;background:#c7962c;"></div><div class="a" style="left:2523px;top:130px;width:14px;height:2px;background:#c7962c;"></div><div class="a" style="left:2523px;top:134px;width:14px;height:2px;background:#c7962c;"></div><div class="a" style="left:2523px;top:138px;width:14px;height:2px;background:#c7962c;"></div><div class="a" style="left:2523px;top:333px;width:14px;height:3px;background:#c7962c;"></div><div class="a" style="left:2523px;top:373px;width:14px;height:2px;background:#c7962c;"></div><div class="a" style="left:2523px;top:406px;width:14px;height:2px;background:#c7962c;"></div><div class="a" style="left:2523px;top:443px;width:14px;height:2px;background:#c7962c;"></div><div class="a" style="left:2523px;top:500px;width:14px;height:2px;background:#c7962c;"></div><div class="a" style="left:2523px;top:504px;width:14px;height:2px;background:#c7962c;"></div><div class="a" style="left:2523px;top:509px;width:14px;height:3px;background:#857b5a;"></div><div class="a" style="left:2523px;top:515px;width:14px;height:2px;background:#c7962c;"></div><div class="a" style="left:2523px;top:519px;width:14px;height:2px;background:#c7962c;"></div><div class="a" style="left:2523px;top:557px;width:14px;height:3px;background:#857b5a;"></div><div class="a" style="left:2523px;top:568px;width:14px;height:2px;background:#857b5a;"></div><div class="a" style="left:2523px;top:597px;width:14px;height:2px;background:#857b5a;"></div><div class="a" style="left:2523px;top:601px;width:14px;height:2px;background:#857b5a;"></div><div class="a" style="left:2523px;top:605px;width:14px;height:2px;background:#857b5a;"></div><div class="a" style="left:2523px;top:609px;width:14px;height:2px;background:#857b5a;"></div><div class="a" style="left:2523px;top:613px;width:14px;height:2px;background:#857b5a;"></div><div class="a" style="left:2523px;top:617px;width:14px;height:2px;background:#857b5a;"></div><div class="a" style="left:2523px;top:624px;width:14px;height:2px;background:#857b5a;"></div><div class="a" style="left:2523px;top:628px;width:14px;height:2px;background:#857b5a;"></div><div class="a" style="left:2523px;top:632px;width:14px;height:2px;background:#857b5a;"></div><div class="a" style="left:2523px;top:690px;width:14px;height:2px;background:#857b5a;"></div><div class="a" style="left:2523px;top:697px;width:14px;height:2px;background:#857b5a;"></div><div class="a" style="left:2523px;top:755px;width:14px;height:2px;background:#857b5a;"></div><div class="a" style="left:2523px;top:762px;width:14px;height:2px;background:#857b5a;"></div><div class="a" style="left:2523px;top:804px;width:14px;height:2px;background:#857b5a;"></div><div class="a" style="left:2523px;top:808px;width:14px;height:2px;background:#857b5a;"></div><div class="a" style="left:2523px;top:812px;width:14px;height:2px;background:#857b5a;"></div><div class="a" style="left:2523px;top:886px;width:14px;height:2px;background:#857b5a;"></div><div class="a" style="left:2523px;top:890px;width:14px;height:2px;background:#857b5a;"></div><div class="a" style="left:2528px;top:815px;width:8px;height:122px;background:rgba(110,112,114,0.55);"></div><div class="a" style="left:1697px;top:963px;width:705px;height:9px;background:rgba(100,103,106,0.55);"></div><div class="a" style="left:1614px;top:973px;width:923px;height:1px;background:#323232;"></div><div class="a" style="left:1614px;top:974px;width:923px;height:23px;background:#313335;"></div><div class="t" style="top:977.49px;font-size:13px;line-height:18px;color:#bbbbbb;font-family:'Liberation Sans', sans-serif;letter-spacing:-0.400px;left:1701px;">script</div><svg class="a" style="left:1743px;top:981px;" width="5" height="10" viewBox="0 0 5 10"><path d="M1 1l3 4-3 4" stroke="#777" fill="none"/></svg><div class="t" style="top:977.49px;font-size:13px;line-height:18px;color:#bbbbbb;font-family:'Liberation Sans', sans-serif;letter-spacing:-0.450px;left:1754px;">add_booking_to_database()</div><div class="a" style="left:2537px;top:58px;width:23px;height:961px;background:#3c3f41;"></div><div class="a" style="left:2537px;top:58px;width:1px;height:961px;background:#323232;"></div><svg class="a" style="left:2543px;top:62px;" width="14" height="16" viewBox="0 0 14 16"><ellipse cx="7" cy="3" rx="6" ry="2.5" fill="#a0a6aa"/><path d="M1 5.5q6 4 12 0v3q-6 4 -12 0zM1 10.5q6 4 12 0v3q-6 4 -12 0z" fill="#a0a6aa"/></svg><div class="t" style="left:2540px;top:82px;width:20px;height:80px;"><div style="position:absolute;left:17px;top:0px;transform:rotate(90deg);transform-origin:0 0;font:12px/16px 'Liberation Sans', sans-serif;letter-spacing:-0.3px;color:#bbbbbb;white-space:nowrap">Database</div></div><div class="a" style="left:1280px;top:997px;width:1280px;height:1px;background:#323232;"></div><div class="a" style="left:1280px;top:998px;width:1280px;height:21px;background:#3c3f41;"></div><svg class="a" style="left:1315px;top:1002px;" width="12" height="11" viewBox="0 0 12 11"><path d="M0 1h2M0 5h2M0 9h2M4 1h8M4 5h8M4 9h8" stroke="#a0a6aa" stroke-width="1.6"/></svg><div class="t" style="top:1000.67px;font-size:12.5px;line-height:18px;color:#bbbbbb;font-family:'Liberation Sans', sans-serif;letter-spacing:-0.350px;left:1330px;"><u>6</u>: TODO</div><svg class="a" style="left:1397px;top:1002px;" width="12" height="12" viewBox="0 0 12 12"><rect x="0" y="0" width="12" height="12" fill="#a0a6aa"/><path d="M2.5 3l3 2.5-3 2.5" stroke="#3c3f41" stroke-width="1.3" fill="none"/></svg><div class="t" style="top:1000.67px;font-size:12.5px;line-height:18px;color:#bbbbbb;font-family:'Liberation Sans', sans-serif;letter-spacing:-0.350px;left:1411px;">Terminal</div><svg class="a" style="left:2460px;top:1001px;" width="14" height="14" viewBox="0 0 14 14"><path d="M7 1A6 5.5 0 1 0 7 12L12 13 11 9A6 5.5 0 0 0 7 1z" fill="none" stroke="#a0a6aa" stroke-width="1.3"/></svg><div class="t" style="top:1000.67px;font-size:12.5px;line-height:18px;color:#bbbbbb;font-family:'Liberation Sans', sans-serif;letter-spacing:-0.350px;left:2478px;">Event Log</div><div class="a" style="left:1280px;top:1018px;width:1280px;height:1px;background:#46494b;"></div><div class="a" style="left:1280px;top:1020px;width:1280px;height:20px;background:#3c3f41;"></div><svg class="a" style="left:1286px;top:1022px;" width="14" height="14" viewBox="0 0 14 14"><rect x="3.6" y="1.6" width="9.3" height="9.3" fill="none" stroke="#bfc1c3" stroke-width="1.2"/><path d="M0.6 3.5v9.9h9.9" stroke="#bfc1c3" stroke-width="1.2" fill="none"/></svg><div class="t" style="top:1020.67px;font-size:12.5px;line-height:18px;color:#bbbbbb;font-family:'Liberation Sans', sans-serif;letter-spacing:-0.550px;left:2303px;">285:15</div><div class="t" style="top:1020.67px;font-size:12.5px;line-height:18px;color:#bbbbbb;font-family:'Liberation Sans', sans-serif;letter-spacing:-0.550px;left:2348px;">CRLF</div><div class="t" style="top:1020.67px;font-size:12.5px;line-height:18px;color:#bbbbbb;font-family:'Liberation Sans', sans-serif;letter-spacing:-0.550px;left:2388px;">UTF-8</div><div class="t" style="top:1020.67px;font-size:12.5px;line-height:18px;color:#bbbbbb;font-family:'Liberation Sans', sans-serif;letter-spacing:-0.550px;left:2431px;">4 spaces</div><svg class="a" style="left:2485px;top:1022px;" width="12" height="13" viewBox="0 0 12 13"><path d="M1 6h9v7H1z" fill="#a0a6aa"/><path d="M3 6V3.5a2.5 2.5 0 0 1 5 0" stroke="#a0a6aa" stroke-width="1.5" fill="none"/></svg><svg class="a" style="left:2510px;top:1022px;" width="14" height="16" viewBox="0 0 14 16"><circle cx="5.5" cy="5.5" r="3.8" fill="#a0a6aa"/><path d="M5.5 0v11M0 5.5h11M1.6 1.6l7.8 7.8M9.4 1.6l-7.8 7.8" stroke="#a0a6aa" stroke-width="1.6"/><circle cx="5.5" cy="5.5" r="1.5" fill="#3c3f41"/><path d="M8.2 9.5a2.3 2.3 0 1 1 3.3 2c-.8.4-1 .8-1 1.5" stroke="#a0a6aa" stroke-width="1.3" fill="none"/><rect x="9.8" y="14.3" width="1.4" height="1.5" fill="#a0a6aa"/></svg><svg class="a" style="left:2534px;top:1022px;" width="14" height="14" viewBox="0 0 14 14"><path d="M3 4.5L4 0.5h6l1 4z" fill="#a0a6aa"/><rect x="0.5" y="4.3" width="13" height="1.5" fill="#a0a6aa"/><path d="M3.5 6.5h7v3a3.5 3.5 0 0 1-7 0z" fill="#a0a6aa"/><circle cx="5.5" cy="8" r="0.8" fill="#3c3f41"/><circle cx="8.5" cy="8" r="0.8" fill="#3c3f41"/><path d="M1 14q1-3 6-3t6 3z" fill="#a0a6aa"/></svg><div class="a" style="left:0px;top:1040px;width:2560px;height:40px;background:#3a3123;"></div><svg class="a" style="left:16px;top:1052px;" width="17" height="17" viewBox="0 0 17 17"><path d="M0 2.3L7 1.3V8H0zM8 1.2L17 0V8H8zM0 9H7V15.7L0 14.7zM8 9H17V17L8 15.8z" fill="#fff"/></svg><svg class="a" style="left:63px;top:1051px;" width="17" height="18" viewBox="0 0 17 18"><circle cx="10.5" cy="6.5" r="5.5" fill="none" stroke="#fff" stroke-width="1.4"/><path d="M6.5 10.5L1 16.5" stroke="#fff" stroke-width="1.6"/></svg><svg class="a" style="left:111px;top:1051px;" width="18" height="18" viewBox="0 0 18 18"><rect x="1" y="4" width="12" height="10" fill="none" stroke="#fff" stroke-width="1.3"/><path d="M1 1h12M1 17h12M16 1v3M16 6v6M16 14v3" stroke="#fff" stroke-width="1.3"/></svg><svg class="a" style="left:160px;top:1050px;" width="21" height="19" viewBox="0 0 21 19"><path d="M0 2h8l2 2h11v15H0z" fill="#e8b646"/><path d="M0 6h21v13H0z" fill="#ffd96a"/><path d="M6 12h9v7h-2.5v-3.5h-4V19H6z" fill="#3aa0e6"/></svg><div class="a" style="left:196px;top:1040px;width:47px;height:40px;background:#5d574b;"></div><svg class="a" style="left:208px;top:1048px;" width="23" height="23" viewBox="0 0 23 23"><circle cx="11.5" cy="11.5" r="11.3" fill="#db4437"/><path d="M11.5 11.5L1.7 5.8A11.3 11.3 0 0 0 6 21.3z" fill="#0f9d58"/><path d="M11.5 11.5L6 21.3A11.3 11.3 0 0 0 22.8 11.5z" fill="#ffcd40"/><circle cx="11.5" cy="11.5" r="5" fill="#fff"/><circle cx="11.5" cy="11.5" r="4" fill="#4285f4"/></svg><div class="a" style="left:196px;top:1077px;width:47px;height:3px;background:#d9a6e8;"></div><svg class="a" style="left:256px;top:1049px;" width="24" height="22" viewBox="0 0 24 22"><rect x="8" y="0" width="16" height="20" fill="#0a64ad"/><rect x="13" y="0" width="6" height="6" fill="#28a8ea"/><path d="M8 10L24 16V22H8z" fill="#1490df"/><rect x="0" y="4" width="12" height="12" fill="#0f4e8c"/><ellipse cx="6" cy="10" rx="3" ry="3.5" fill="none" stroke="#fff" stroke-width="1.6"/></svg><div class="a" style="left:249px;top:1077px;width:40px;height:3px;background:#d9a6e8;"></div><svg class="a" style="left:305px;top:1048px;" width="25" height="24" viewBox="0 0 25 24"><circle cx="19" cy="4" r="3" fill="#7b83eb"/><circle cx="12" cy="3.5" r="3.5" fill="#5059c9"/><rect x="9" y="8" width="15" height="13" rx="3" fill="#7b83eb"/><rect x="0" y="5" width="13" height="13" rx="1" fill="#4b53bc"/><path d="M3 8h7M6.5 8v7" stroke="#fff" stroke-width="2"/><circle cx="20" cy="20" r="4.5" fill="#92c353"/><path d="M17.8 20l1.6 1.6 2.8-3" stroke="#fff" stroke-width="1.3" fill="none"/></svg><div class="a" style="left:298px;top:1077px;width:40px;height:3px;background:#d9a6e8;"></div><svg class="a" style="left:355px;top:1048px;" width="24" height="24" viewBox="0 0 24 24"><path d="M12 0L24 12 12 24 0 12z" fill="#3fae6d" transform="rotate(0)"/><path d="M12 4L20 12 12 20 4 12z" fill="none" stroke="#d9f2e2" stroke-width="1.3"/><path d="M8 12h8M12 8v8" stroke="#d9f2e2" stroke-width="1"/></svg><div class="a" style="left:347px;top:1077px;width:40px;height:3px;background:#d9a6e8;"></div><svg class="a" style="left:406px;top:1049px;" width="21" height="21" viewBox="0 0 21 21"><circle cx="10.5" cy="10.5" r="10.3" fill="#0b63e0"/><circle cx="10.5" cy="9" r="4" fill="none" stroke="#fff" stroke-width="2"/><path d="M10.5 12v5" stroke="#fff" stroke-width="2"/></svg><svg class="a" style="left:454px;top:1049px;" width="22" height="22" viewBox="0 0 22 22"><circle cx="11" cy="11" r="11" fill="#f4efe8"/><path d="M7 9h8M8 13h8M9 6v9M13 6v10" stroke="#e01e5a" stroke-width="2" stroke-linecap="round"/><path d="M9 6v3" stroke="#36c5f0" stroke-width="2.2" stroke-linecap="round"/><path d="M13 6v3" stroke="#2eb67d" stroke-width="2.2" stroke-linecap="round"/><path d="M13 13v3" stroke="#ecb22e" stroke-width="2.2" stroke-linecap="round"/></svg><svg class="a" style="left:503px;top:1049px;" width="23" height="23" viewBox="0 0 23 23"><circle cx="11.5" cy="11.5" r="8.5" fill="none" stroke="#ea4335" stroke-width="5" stroke-dasharray="13.4 40"/><circle cx="11.5" cy="11.5" r="8.5" fill="none" stroke="#fbbc05" stroke-width="5" stroke-dasharray="0 13.4 13.4 40"/><circle cx="11.5" cy="11.5" r="8.5" fill="none" stroke="#34a853" stroke-width="5" stroke-dasharray="0 26.8 13.4 40"/><circle cx="11.5" cy="11.5" r="8.5" fill="none" stroke="#4285f4" stroke-width="5" stroke-dasharray="0 40.2 13.4 40"/></svg><svg class="a" style="left:550px;top:1048px;" width="24" height="24" viewBox="0 0 24 24"><path d="M2 3h9v3H5v5H2z" fill="#1e88e5"/><rect x="6" y="9" width="12" height="10" rx="1" fill="#707070"/><path d="M8.5 9V6.5a3.5 3.5 0 0 1 7 0V9" stroke="#909090" stroke-width="2" fill="none"/><path d="M16 15l6 6M22 17v4h-4" stroke="#2ecc40" stroke-width="2" fill="none"/></svg><svg class="a" style="left:600px;top:1049px;" width="23" height="23" viewBox="0 0 23 23"><circle cx="11.5" cy="11.5" r="11.3" fill="#1ed760"/><path d="M5 8q7-2 13 1.5M5.8 11.8q5.5-1.5 10.5 1M6.5 15.3q4.5-1 8.3 0.8" stroke="#111" stroke-width="1.8" fill="none" stroke-linecap="round"/></svg><div class="a" style="left:592px;top:1077px;width:40px;height:3px;background:#d9a6e8;"></div><svg class="a" style="left:648px;top:1048px;" width="24" height="24" viewBox="0 0 24 24"><path d="M0 6L9 0 24 4 21 24 3 22z" fill="#b345f1"/><path d="M4 5L18 1 24 12 10 24 2 18z" fill="#765af8"/><rect x="4" y="4" width="16" height="16" fill="#000"/><text x="5.5" y="12" font-size="7.5" font-weight="700" fill="#fff" font-family="Liberation Sans">PS</text><rect x="5.5" y="16" width="6" height="1.4" fill="#fff"/></svg><div class="a" style="left:641px;top:1077px;width:40px;height:3px;background:#d9a6e8;"></div><svg class="a" style="left:697px;top:1048px;" width="24" height="24" viewBox="0 0 24 24"><path d="M0 6L9 0 24 4 21 24 3 22z" fill="#21d789"/><path d="M4 5L18 1 24 12 10 24 2 18z" fill="#9775f8"/><rect x="4" y="4" width="16" height="16" fill="#000"/><text x="5.3" y="12" font-size="7.5" font-weight="700" fill="#fff" font-family="Liberation Sans">DG</text><rect x="5.5" y="16" width="6" height="1.4" fill="#fff"/></svg><svg class="a" style="left:746px;top:1048px;" width="24" height="24" viewBox="0 0 24 24"><path d="M0 6L9 0 24 4 21 24 3 22z" fill="#fe315d"/><path d="M4 5L18 1 24 12 10 24 2 18z" fill="#087cfa"/><rect x="4" y="4" width="16" height="16" fill="#000"/><text x="6.5" y="12" font-size="7.5" font-weight="700" fill="#fff" font-family="Liberation Sans">IJ</text><rect x="5.5" y="16" width="6" height="1.4" fill="#fff"/></svg><svg class="a" style="left:796px;top:1049px;" width="23" height="23" viewBox="0 0 23 23"><path d="M17 0L23 3V20L17 23 6 13 2 16 0 15V8l2-1 4 3zM17 6L10 11.5 17 17z" fill="#2489ca"/></svg><svg class="a" style="left:845px;top:1048px;" width="24" height="24" viewBox="0 0 24 24"><rect x="0" y="1" width="24" height="19" fill="#1c3a4a" stroke="#6fb5d3" stroke-width="1"/><path d="M7 5h10M7 10h10M7 15h10M7 5v10" stroke="#e0f0f8" stroke-width="1.8"/><path d="M6 22h12" stroke="#6fb5d3" stroke-width="1.5"/></svg><svg class="a" style="left:894px;top:1048px;" width="24" height="24" viewBox="0 0 24 24"><rect x="0" y="0" width="24" height="24" rx="3" fill="#fb7a24"/><path d="M6 6q6 3 12 0q-3 6 0 12q-6-3 -12 0q3-6 0-12z" fill="none" stroke="#fff" stroke-width="2.2"/></svg><svg class="a" style="left:2304px;top:1055px;" width="14" height="8" viewBox="0 0 14 8"><path d="M1 7.5L7 1.5 13 7.5" stroke="#fff" stroke-width="1.3" fill="none"/></svg><svg class="a" style="left:2326px;top:1053px;" width="17" height="11" viewBox="0 0 17 11"><path d="M4 11a4 4 0 0 1 0-8 5.5 5.5 0 0 1 10 2 3 3 0 0 1 0 6z" fill="#2a8ad4"/></svg><svg class="a" style="left:2351px;top:1051px;" width="17" height="16" viewBox="0 0 17 16"><rect x="4" y="3" width="12" height="9" fill="none" stroke="#fff" stroke-width="1.2"/><path d="M10 12v3M6 15.5h8" stroke="#fff" stroke-width="1.2"/><rect x="0" y="5" width="7" height="6" fill="#fff"/><path d="M1.5 5V3a2 2 0 0 1 4 0v2" stroke="#fff" fill="none"/></svg><svg class="a" style="left:2375px;top:1051px;" width="16" height="16" viewBox="0 0 16 16"><circle cx="8" cy="8" r="6" fill="none" stroke="#ea4335" stroke-width="4" stroke-dasharray="9.4 30"/><circle cx="8" cy="8" r="6" fill="none" stroke="#fbbc05" stroke-width="4" stroke-dasharray="0 9.4 9.4 30"/><circle cx="8" cy="8" r="6" fill="none" stroke="#34a853" stroke-width="4" stroke-dasharray="0 18.8 9.4 30"/><circle cx="8" cy="8" r="6" fill="none" stroke="#4285f4" stroke-width="4" stroke-dasharray="0 28.2 9.4 30"/></svg><svg class="a" style="left:2398px;top:1051px;" width="17" height="16" viewBox="0 0 17 16"><rect x="4" y="2" width="12" height="9" fill="none" stroke="#fff" stroke-width="1.2"/><path d="M10 11v3M6 14.5h8" stroke="#fff" stroke-width="1.2"/><rect x="0.6" y="0.6" width="5" height="8" fill="#3a3123" stroke="#fff" stroke-width="1.1"/></svg><svg class="a" style="left:2423px;top:1052px;" width="17" height="14" viewBox="0 0 17 14"><path d="M1 5h3l4-4v12l-4-4H1z" fill="none" stroke="#fff" stroke-width="1.1"/><path d="M10.5 4.5q1.5 2.5 0 5M13 3q2.5 4 0 8M15.5 1.5q3 5.5 0 11" stroke="#fff" stroke-width="1" fill="none"/></svg><div class="t" style="top:1044.34px;font-size:12px;line-height:17px;color:#fff;font-family:'Liberation Sans', sans-serif;letter-spacing:-0.200px;left:2435.0px;width:80px;text-align:center;">11:09</div><div class="t" style="top:1062.34px;font-size:12px;line-height:17px;color:#fff;font-family:'Liberation Sans', sans-serif;letter-spacing:-0.200px;left:2435.0px;width:80px;text-align:center;">13-11-2019</div><svg class="a" style="left:2518px;top:1051px;" width="18" height="17" viewBox="0 0 18 17"><path d="M0 0h18v13H11l-2 4-2-4H0z" fill="#fff"/><path d="M3 4h12M3 7h12M3 10h8" stroke="#3a3123" stroke-width="1.2"/></svg><div class="a" style="left:2555px;top:1050px;width:1px;height:30px;background:#6a6459;"></div>
</body></html>
